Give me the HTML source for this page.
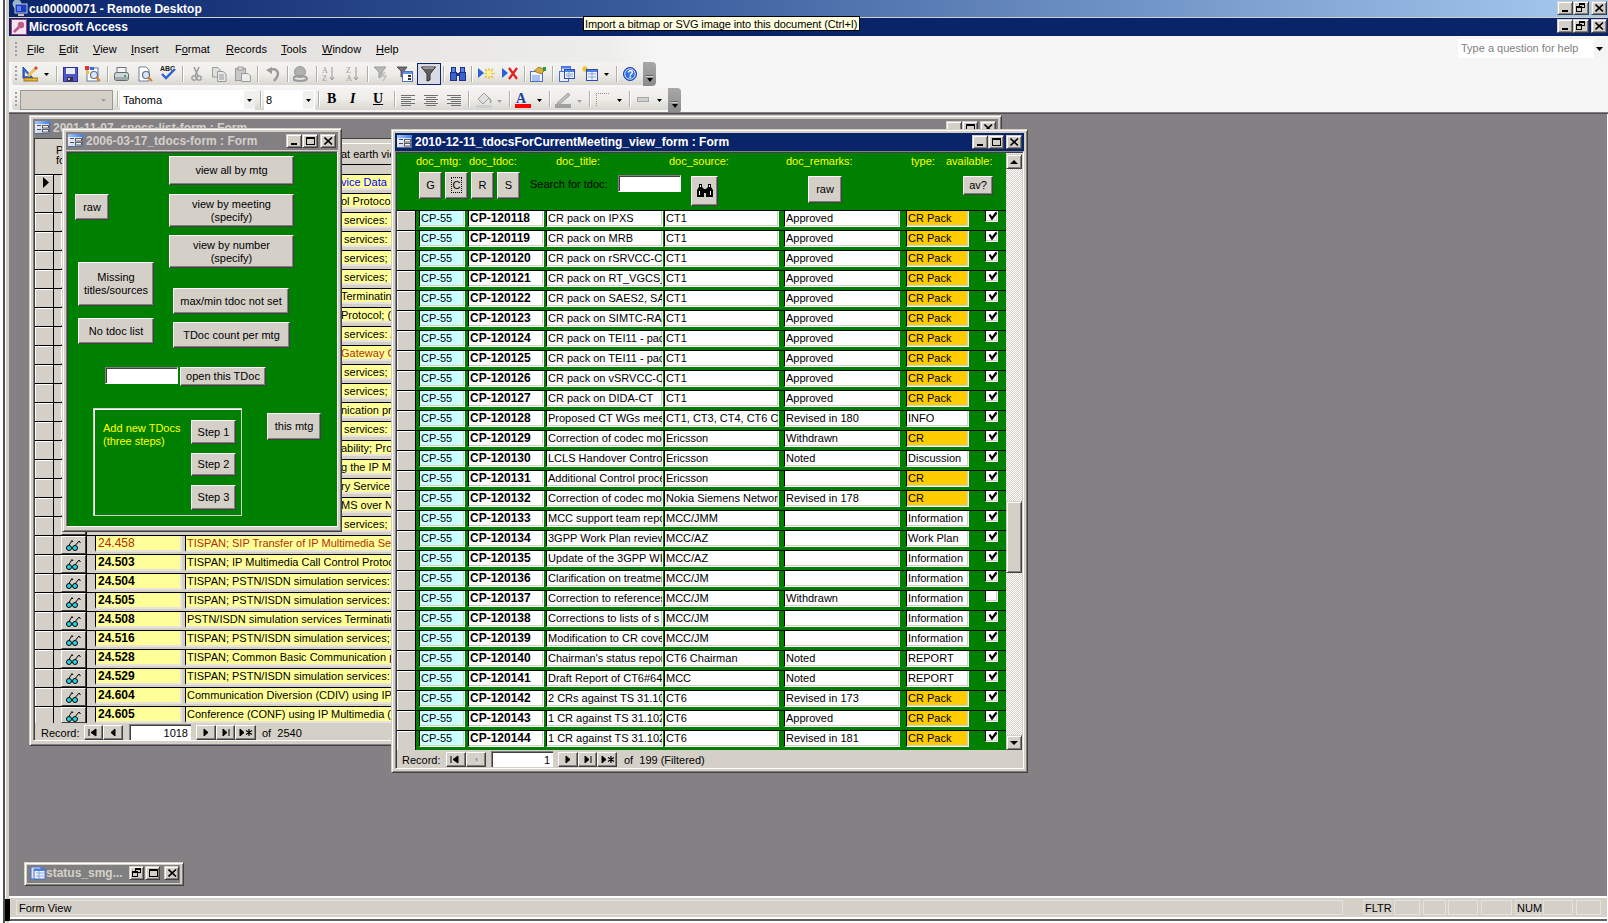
<!DOCTYPE html><html><head><meta charset="utf-8"><style>
*{margin:0;padding:0;box-sizing:border-box}
html,body{width:1608px;height:923px;overflow:hidden}
body{position:relative;background:#fff;font-family:"Liberation Sans",sans-serif;font-size:11px;color:#000}
.a{position:absolute}
.t{white-space:nowrap;line-height:13px}
.btn{background:#D4D0C8;border-top:1px solid #fff;border-left:1px solid #fff;border-right:1px solid #404040;border-bottom:1px solid #404040;box-shadow:inset -1px -1px 0 #808080;display:flex;align-items:center;justify-content:center;text-align:center;line-height:13px;white-space:nowrap}
.sunk{border-top:1px solid #808080;border-left:1px solid #808080;border-right:1px solid #fff;border-bottom:1px solid #fff;box-shadow:inset 1px 1px 0 #404040, inset -1px -1px 0 #D4D0C8}
.cell{overflow:hidden;white-space:nowrap;line-height:14px;padding-left:1px;border-left:1px solid #000;border-right:1px solid #fff;border-bottom:1px solid #fff;box-shadow:inset -1px -1px 0 #D4D0C8}
.tb{font-weight:bold;color:#fff;white-space:nowrap}
.raised{border-top:1px solid #D4D0C8;border-left:1px solid #D4D0C8;border-right:1px solid #404040;border-bottom:1px solid #404040;box-shadow:inset 1px 1px 0 #fff, inset -1px -1px 0 #808080}
</style></head><body><div class="a " style="left:0px;top:0px;width:3px;height:923px;background:#fff"></div><div class="a " style="left:3px;top:0px;width:2px;height:923px;background:#505050"></div><div class="a " style="left:5px;top:0px;width:4px;height:923px;background:#D4D0C8;border-left:1px solid #fff"></div><div class="a " style="left:9px;top:0px;width:1599px;height:17px;background:linear-gradient(to right,#0A246A 0%,#3a5c9c 40%,#A6CAF0 100%)"></div><svg class="a" style="left:11px;top:0px" width="18" height="17" viewBox="0 0 18 17"><circle cx="6" cy="4" r="4.5" fill="#b8d8e0" opacity="0.8"/><rect x="4" y="4" width="12" height="9" fill="#1a3cc0" stroke="#c8c8c8"/><rect x="6" y="6" width="4" height="5" fill="#6080ff"/><rect x="7" y="14" width="6" height="2" fill="#c0c0c0"/></svg><div class="a t " style="left:29px;top:2px;font-weight:bold;color:#fff;font-size:12px;line-height:14px">cu00000071 - Remote Desktop</div><div class="a raised" style="left:1557px;top:1px;width:16px;height:14px;background:#D4D0C8"><div class="a" style="left:4px;top:8px;width:6px;height:2px;background:#000"></div></div><div class="a raised" style="left:1573px;top:1px;width:16px;height:14px;background:#D4D0C8"><div class="a" style="left:5px;top:1px;width:6px;height:5px;border:1px solid #000;border-top-width:2px"></div><div class="a" style="left:2px;top:4px;width:6px;height:6px;border:1px solid #000;border-top-width:2px;background:#D4D0C8"></div></div><div class="a raised" style="left:1591px;top:1px;width:16px;height:14px;background:#D4D0C8"><svg class="a" style="left:3px;top:2px" width="9" height="8" viewBox="0 0 9 8"><path d="M0.5 0.5 L8 7.5 M8 0.5 L0.5 7.5" stroke="#000" stroke-width="1.6"/></svg></div><div class="a " style="left:9px;top:17px;width:1599px;height:1px;background:#D4D0C8"></div><div class="a " style="left:9px;top:18px;width:1599px;height:18px;background:#0A246A"></div><svg class="a" style="left:11px;top:19px" width="16" height="16" viewBox="0 0 16 16"><rect x="0.5" y="0.5" width="15" height="15" fill="#f4e4ee" stroke="#a04070"/><circle cx="10" cy="6" r="3.2" fill="#c05a8a"/><path d="M8 8 L3 13" stroke="#c05a8a" stroke-width="2.6"/></svg><div class="a t " style="left:29px;top:20px;font-weight:bold;color:#fff;font-size:12px;line-height:14px">Microsoft Access</div><div class="a raised" style="left:1557px;top:19px;width:16px;height:14px;background:#D4D0C8"><div class="a" style="left:4px;top:8px;width:6px;height:2px;background:#000"></div></div><div class="a raised" style="left:1573px;top:19px;width:16px;height:14px;background:#D4D0C8"><div class="a" style="left:5px;top:1px;width:6px;height:5px;border:1px solid #000;border-top-width:2px"></div><div class="a" style="left:2px;top:4px;width:6px;height:6px;border:1px solid #000;border-top-width:2px;background:#D4D0C8"></div></div><div class="a raised" style="left:1591px;top:19px;width:16px;height:14px;background:#D4D0C8"><svg class="a" style="left:3px;top:2px" width="9" height="8" viewBox="0 0 9 8"><path d="M0.5 0.5 L8 7.5 M8 0.5 L0.5 7.5" stroke="#000" stroke-width="1.6"/></svg></div><div class="a " style="left:9px;top:36px;width:1599px;height:77px;background:#F6F6F6"></div><div class="a " style="left:9px;top:36px;width:1599px;height:26px;background:linear-gradient(to right,#DEDCD6 0px,#E6E4E0 300px,#EDEDEB 600px,#F6F6F6 650px)"></div><div class="a " style="left:15px;top:42px;width:2px;height:2px;background:#a0a0a0"></div><div class="a " style="left:15px;top:46px;width:2px;height:2px;background:#a0a0a0"></div><div class="a " style="left:15px;top:50px;width:2px;height:2px;background:#a0a0a0"></div><div class="a " style="left:15px;top:54px;width:2px;height:2px;background:#a0a0a0"></div><div class="a t " style="left:27px;top:42px;font-size:11px;line-height:14px"><u>F</u>ile</div><div class="a t " style="left:59px;top:42px;font-size:11px;line-height:14px"><u>E</u>dit</div><div class="a t " style="left:93px;top:42px;font-size:11px;line-height:14px"><u>V</u>iew</div><div class="a t " style="left:131px;top:42px;font-size:11px;line-height:14px"><u>I</u>nsert</div><div class="a t " style="left:175px;top:42px;font-size:11px;line-height:14px">F<u>o</u>rmat</div><div class="a t " style="left:226px;top:42px;font-size:11px;line-height:14px"><u>R</u>ecords</div><div class="a t " style="left:281px;top:42px;font-size:11px;line-height:14px"><u>T</u>ools</div><div class="a t " style="left:322px;top:42px;font-size:11px;line-height:14px"><u>W</u>indow</div><div class="a t " style="left:376px;top:42px;font-size:11px;line-height:14px"><u>H</u>elp</div><div class="a " style="left:1458px;top:39px;width:148px;height:19px;background:#fff"></div><div class="a t " style="left:1461px;top:41px;color:#808080;line-height:14px">Type a question for help</div><div class="a " style="left:1594px;top:39px;width:12px;height:19px;background:#F4F4F4"></div><svg class="a" style="left:1596px;top:47px" width="7" height="4"><path d="M0 0H7L3.5 4Z" fill="#000"/></svg><div class="a " style="left:583px;top:16px;width:277px;height:15px;background:#FFFFE1;border:1px solid #000"></div><div class="a t " style="left:585px;top:18px;line-height:13px;letter-spacing:-0.1px">Import a bitmap or SVG image into this document (Ctrl+I)</div><div class="a " style="left:12px;top:62px;width:632px;height:23px;background:linear-gradient(to bottom,#F4F3F0 0%,#EEEDE9 50%,#D9D7D0 100%);border-radius:3px 0 0 3px"></div><div class="a " style="left:643px;top:62px;width:13px;height:24px;background:linear-gradient(to bottom,#A8A8A8,#8a8a8a);border-radius:0 4px 4px 0"></div><svg class="a" style="left:646px;top:75px" width="8" height="8"><path d="M0 1H7" stroke="#fff"/><path d="M1 3H7L4 7Z" fill="#000"/><path d="M0 0H7" stroke="#000"/></svg><div class="a " style="left:12px;top:88px;width:657px;height:22px;background:linear-gradient(to bottom,#F4F3F0 0%,#EEEDE9 50%,#D9D7D0 100%);border-radius:3px 0 0 3px"></div><div class="a " style="left:668px;top:88px;width:13px;height:25px;background:linear-gradient(to bottom,#A8A8A8,#8a8a8a);border-radius:0 4px 4px 0"></div><svg class="a" style="left:671px;top:101px" width="8" height="8"><path d="M0 1H7" stroke="#fff"/><path d="M1 3H7L4 7Z" fill="#000"/><path d="M0 0H7" stroke="#000"/></svg><div class="a " style="left:15px;top:66px;width:2px;height:2px;background:#a0a0a0"></div><div class="a " style="left:15px;top:70px;width:2px;height:2px;background:#a0a0a0"></div><div class="a " style="left:15px;top:74px;width:2px;height:2px;background:#a0a0a0"></div><div class="a " style="left:15px;top:78px;width:2px;height:2px;background:#a0a0a0"></div><div class="a " style="left:15px;top:92px;width:2px;height:2px;background:#a0a0a0"></div><div class="a " style="left:15px;top:96px;width:2px;height:2px;background:#a0a0a0"></div><div class="a " style="left:15px;top:100px;width:2px;height:2px;background:#a0a0a0"></div><div class="a " style="left:15px;top:104px;width:2px;height:2px;background:#a0a0a0"></div><div class="a " style="left:56px;top:66px;width:1px;height:16px;background:#B0AEA8;border-right:1px solid #fff;width:2px"></div><div class="a " style="left:107px;top:66px;width:1px;height:16px;background:#B0AEA8;border-right:1px solid #fff;width:2px"></div><div class="a " style="left:182px;top:66px;width:1px;height:16px;background:#B0AEA8;border-right:1px solid #fff;width:2px"></div><div class="a " style="left:257px;top:66px;width:1px;height:16px;background:#B0AEA8;border-right:1px solid #fff;width:2px"></div><div class="a " style="left:287px;top:66px;width:1px;height:16px;background:#B0AEA8;border-right:1px solid #fff;width:2px"></div><div class="a " style="left:316px;top:66px;width:1px;height:16px;background:#B0AEA8;border-right:1px solid #fff;width:2px"></div><div class="a " style="left:367px;top:66px;width:1px;height:16px;background:#B0AEA8;border-right:1px solid #fff;width:2px"></div><div class="a " style="left:443px;top:66px;width:1px;height:16px;background:#B0AEA8;border-right:1px solid #fff;width:2px"></div><div class="a " style="left:471px;top:66px;width:1px;height:16px;background:#B0AEA8;border-right:1px solid #fff;width:2px"></div><div class="a " style="left:524px;top:66px;width:1px;height:16px;background:#B0AEA8;border-right:1px solid #fff;width:2px"></div><div class="a " style="left:552px;top:66px;width:1px;height:16px;background:#B0AEA8;border-right:1px solid #fff;width:2px"></div><div class="a " style="left:616px;top:66px;width:1px;height:16px;background:#B0AEA8;border-right:1px solid #fff;width:2px"></div><div class="a " style="left:117px;top:91px;width:1px;height:16px;background:#B0AEA8;border-right:1px solid #fff;width:2px"></div><div class="a " style="left:260px;top:91px;width:1px;height:16px;background:#B0AEA8;border-right:1px solid #fff;width:2px"></div><div class="a " style="left:318px;top:91px;width:1px;height:16px;background:#B0AEA8;border-right:1px solid #fff;width:2px"></div><div class="a " style="left:394px;top:91px;width:1px;height:16px;background:#B0AEA8;border-right:1px solid #fff;width:2px"></div><div class="a " style="left:468px;top:91px;width:1px;height:16px;background:#B0AEA8;border-right:1px solid #fff;width:2px"></div><div class="a " style="left:509px;top:91px;width:1px;height:16px;background:#B0AEA8;border-right:1px solid #fff;width:2px"></div><div class="a " style="left:549px;top:91px;width:1px;height:16px;background:#B0AEA8;border-right:1px solid #fff;width:2px"></div><div class="a " style="left:589px;top:91px;width:1px;height:16px;background:#B0AEA8;border-right:1px solid #fff;width:2px"></div><div class="a " style="left:629px;top:91px;width:1px;height:16px;background:#B0AEA8;border-right:1px solid #fff;width:2px"></div><div class="a " style="left:9px;top:112px;width:1599px;height:2px;background:#505050;border-top:1px solid #808080"></div><svg class="a" style="left:22px;top:66px" width="16" height="16" viewBox="0 0 16 16"><path d="M1 1L1 12L11 12Z" fill="#3d6fd8" stroke="#2040a0"/><path d="M3 6L3 10L7 10Z" fill="#eaf0ff"/><rect x="2" y="12" width="14" height="3" fill="#e8b830" stroke="#906010" stroke-width="0.8"/><path d="M6 10L14 2" stroke="#e8c060" stroke-width="3"/><path d="M13 1L15 3" stroke="#d04040" stroke-width="2.5"/></svg><svg class="a" style="left:44px;top:73px" width="5" height="3"><path d="M0 0H5L2.5 3Z" fill="#000"/></svg><svg class="a" style="left:63px;top:67px" width="15" height="15" viewBox="0 0 15 15"><rect x="0.5" y="0.5" width="14" height="14" fill="#4f57c8" stroke="#30308a"/><rect x="3" y="1" width="9" height="6" fill="#e8ecf8"/><rect x="4" y="10" width="6" height="4" fill="#303048"/><rect x="5" y="11" width="2" height="2" fill="#c0c0d0"/></svg><svg class="a" style="left:85px;top:66px" width="16" height="16" viewBox="0 0 16 16"><rect x="2" y="2" width="11" height="13" fill="#fff" stroke="#6078a8"/><rect x="0" y="0" width="4" height="4" fill="#e03030"/><rect x="5" y="1" width="4" height="3" fill="#3070e0"/><rect x="1" y="5" width="3" height="3" fill="#f0c020"/><circle cx="9" cy="9" r="3.5" fill="#d8e8f8" stroke="#607090" stroke-width="1.2"/><path d="M11.5 11.5L15 15" stroke="#e08020" stroke-width="2.2"/></svg><svg class="a" style="left:114px;top:67px" width="15" height="15" viewBox="0 0 15 15"><rect x="3" y="0.5" width="9" height="6" fill="#f4f4f4" stroke="#707880"/><rect x="0.5" y="5.5" width="14" height="8" rx="2" fill="#d0d4dc" stroke="#606870"/><rect x="1" y="10" width="13" height="3" fill="#a0a8b0"/><rect x="10" y="8" width="2" height="2" fill="#20c020"/></svg><svg class="a" style="left:138px;top:66px" width="16" height="16" viewBox="0 0 16 16"><path d="M1 1H8L11 4V15H1Z" fill="#fff" stroke="#7080a0"/><circle cx="8" cy="9" r="3.5" fill="#d8e8f8" stroke="#607090" stroke-width="1.2"/><path d="M10.5 11.5L14 15" stroke="#e08020" stroke-width="2.2"/></svg><svg class="a" style="left:160px;top:65px" width="16" height="15" viewBox="0 0 16 15"><text x="0" y="6" font-family="Liberation Sans" font-weight="bold" font-size="7" fill="#202020">ABC</text><path d="M2 9L6 13L15 4" stroke="#3060d0" stroke-width="2.4" fill="none"/></svg><svg class="a" style="left:191px;top:66px" width="11" height="15" viewBox="0 0 11 15"><path d="M3 1L7 10M8 1L4 10" stroke="#9a9a9a" stroke-width="1.5"/><circle cx="3" cy="12" r="2.2" fill="none" stroke="#9a9a9a" stroke-width="1.3"/><circle cx="8" cy="12" r="2.2" fill="none" stroke="#9a9a9a" stroke-width="1.3"/></svg><svg class="a" style="left:212px;top:67px" width="15" height="15" viewBox="0 0 15 15"><path d="M0.5 0.5H6L8 2.5V10H0.5Z" fill="#e0e0e0" stroke="#9a9a9a"/><path d="M5.5 4.5H11L14 7V14.5H5.5Z" fill="#e8e8e8" stroke="#9a9a9a"/><path d="M7 8H12M7 10H12M7 12H12" stroke="#9a9a9a"/></svg><svg class="a" style="left:235px;top:66px" width="16" height="16" viewBox="0 0 16 16"><rect x="0.5" y="2.5" width="10" height="12" fill="#c8c8c8" stroke="#9a9a9a"/><rect x="3" y="1" width="5" height="3" fill="#e0e0e0" stroke="#9a9a9a"/><path d="M6.5 7.5H13L15.5 10V15.5H6.5Z" fill="#ececec" stroke="#9a9a9a"/></svg><svg class="a" style="left:266px;top:67px" width="14" height="15" viewBox="0 0 14 15"><path d="M4 3C9 1 14 4 11 10L8 14" stroke="#9a9a9a" stroke-width="2.4" fill="none"/><path d="M0 3L6 0L6 7Z" fill="#9a9a9a"/></svg><svg class="a" style="left:293px;top:66px" width="16" height="16" viewBox="0 0 16 16"><circle cx="7" cy="6" r="5.5" fill="#b0b0b0" stroke="#9a9a9a"/><ellipse cx="7" cy="12.5" rx="7" ry="2.5" fill="none" stroke="#9a9a9a" stroke-width="2"/></svg><svg class="a" style="left:322px;top:66px" width="13" height="16" viewBox="0 0 13 16"><text x="0" y="7" font-family="Liberation Serif" font-size="8" fill="#9a9a9a">A</text><text x="0" y="15" font-family="Liberation Serif" font-size="8" fill="#9a9a9a">Z</text><path d="M10 1V14M8 11L10 14L12 11" stroke="#9a9a9a" fill="none"/></svg><svg class="a" style="left:346px;top:66px" width="13" height="16" viewBox="0 0 13 16"><text x="0" y="7" font-family="Liberation Serif" font-size="8" fill="#9a9a9a">Z</text><text x="0" y="15" font-family="Liberation Serif" font-size="8" fill="#9a9a9a">A</text><path d="M10 1V14M8 11L10 14L12 11" stroke="#9a9a9a" fill="none"/></svg><svg class="a" style="left:374px;top:66px" width="15" height="16" viewBox="0 0 15 16"><path d="M0 1H12L8 6V10L5 12V6Z" fill="#b8b8b8" stroke="#9a9a9a"/><path d="M11 6L8 10H12L9 15" stroke="#c0c0c0" stroke-width="1.5" fill="none"/></svg><svg class="a" style="left:397px;top:66px" width="16" height="16" viewBox="0 0 16 16"><path d="M0 1H10L7 5V9L4 11V5Z" fill="#707070" stroke="#404040" stroke-width="0.8"/><rect x="5.5" y="5.5" width="10" height="10" fill="#fff" stroke="#4a70c8"/><rect x="6" y="6" width="9" height="2" fill="#6a90e0"/><rect x="11" y="9" width="3" height="2" fill="#333"/><rect x="11" y="12" width="3" height="2" fill="#333"/></svg><div class="a " style="left:417px;top:63px;width:24px;height:22px;background:#D8DAE4;border:1px solid #0A246A"></div><svg class="a" style="left:421px;top:66px" width="15" height="16" viewBox="0 0 15 16"><path d="M0.5 1H14.5L9 8V14L6 15V8Z" fill="#606060" stroke="#303030"/><path d="M2 2H13" stroke="#d0d0d0"/></svg><svg class="a" style="left:450px;top:66px" width="16" height="16" viewBox="0 0 16 16"><rect x="0.5" y="6.5" width="6" height="8" fill="#3a62c8" stroke="#20308a"/><rect x="9.5" y="6.5" width="6" height="8" fill="#3a62c8" stroke="#20308a"/><rect x="1.5" y="1.5" width="4" height="5" fill="#5a82e0" stroke="#20308a"/><rect x="10.5" y="1.5" width="4" height="5" fill="#5a82e0" stroke="#20308a"/><rect x="6" y="7" width="4" height="3" fill="#20308a"/></svg><svg class="a" style="left:478px;top:67px" width="17" height="13" viewBox="0 0 17 13"><path d="M0 1L6 6L0 11Z" fill="#2a60d8"/><path d="M11 1V12M5.5 6.5H16.5M7 2L15 11M15 2L7 11" stroke="#f0c020" stroke-width="1.2"/><rect x="9" y="4" width="4" height="5" fill="#fff8a0"/></svg><svg class="a" style="left:502px;top:67px" width="16" height="13" viewBox="0 0 16 13"><path d="M0 1L6 6L0 11Z" fill="#2a60d8"/><path d="M7 1L15 12M15 1L7 12" stroke="#e02020" stroke-width="2.2"/></svg><svg class="a" style="left:530px;top:66px" width="16" height="16" viewBox="0 0 16 16"><rect x="0.5" y="5.5" width="12" height="10" fill="#eef2fc" stroke="#4a70c8"/><path d="M2 10H10M2 12H10M2 14H10" stroke="#6a90e0"/><path d="M4 5L9 1L15 4L11 8Z" fill="#d8b040" stroke="#907010" stroke-width="0.8"/><rect x="13" y="1" width="3" height="4" fill="#20a040"/></svg><svg class="a" style="left:559px;top:66px" width="16" height="16" viewBox="0 0 16 16"><rect x="2.5" y="0.5" width="9" height="12" fill="#e0e8f8" stroke="#4a70c8"/><rect x="2.5" y="0.5" width="9" height="2" fill="#4a80e8"/><rect x="0.5" y="5.5" width="9" height="10" fill="#e8eefa" stroke="#4a70c8"/><rect x="5.5" y="3.5" width="10" height="9" fill="#eef3fc" stroke="#2a50a8"/><rect x="6" y="4" width="9" height="2" fill="#4a80e8"/><path d="M7 8H14M7 10H14M10 6V12" stroke="#8aa8e0"/></svg><svg class="a" style="left:582px;top:66px" width="16" height="16" viewBox="0 0 16 16"><path d="M3 0V6M0 3H6M1 1L5 5M5 1L1 5" stroke="#f0c020" stroke-width="1.2"/><rect x="4.5" y="3.5" width="11" height="11" fill="#eef3fc" stroke="#2a50a8"/><rect x="5" y="4" width="10" height="2" fill="#4a80e8"/><path d="M6 8H14M6 11H14M10 6V14" stroke="#8aa8e0"/></svg><svg class="a" style="left:604px;top:73px" width="5" height="3"><path d="M0 0H5L2.5 3Z" fill="#000"/></svg><svg class="a" style="left:623px;top:67px" width="14" height="14" viewBox="0 0 14 14"><circle cx="7" cy="7" r="6.5" fill="#2f6ee8" stroke="#1840a0"/><circle cx="7" cy="7" r="5.2" fill="none" stroke="#fff" stroke-width="0.8"/><text x="4.2" y="11" font-family="Liberation Sans" font-weight="bold" font-size="10" fill="#fff">?</text></svg><div class="a " style="left:20px;top:90px;width:93px;height:20px;background:#D4D0C8;border:1px solid #9a9890"></div><svg class="a" style="left:101px;top:99px" width="5" height="3"><path d="M0 0H5L2.5 3Z" fill="#a0a0a0"/></svg><div class="a " style="left:120px;top:90px;width:135px;height:20px;background:#fff"></div><div class="a " style="left:244px;top:91px;width:11px;height:18px;background:#F0F0EE"></div><svg class="a" style="left:247px;top:99px" width="5" height="3"><path d="M0 0H5L2.5 3Z" fill="#000"/></svg><div class="a t " style="left:123px;top:93px;font-size:11px;line-height:14px">Tahoma</div><div class="a " style="left:264px;top:90px;width:51px;height:20px;background:#fff"></div><div class="a " style="left:303px;top:91px;width:11px;height:18px;background:#F0F0EE"></div><svg class="a" style="left:306px;top:99px" width="5" height="3"><path d="M0 0H5L2.5 3Z" fill="#000"/></svg><div class="a t " style="left:266px;top:93px;font-size:11px;line-height:14px">8</div><div class="a t " style="left:327px;top:91px;font-family:Liberation Serif;font-weight:bold;font-size:14px;line-height:16px">B</div><div class="a t " style="left:350px;top:91px;font-family:Liberation Serif;font-weight:bold;font-style:italic;font-size:14px;line-height:16px">I</div><div class="a t " style="left:373px;top:91px;font-family:Liberation Serif;font-weight:bold;font-size:14px;line-height:16px;text-decoration:underline">U</div><svg class="a" style="left:401px;top:94px" width="14" height="13" viewBox="0 0 14 13"><path d="M0 1.5H14" stroke="#707070"/><path d="M0 3.5H10" stroke="#707070"/><path d="M0 5.5H14" stroke="#707070"/><path d="M0 7.5H10" stroke="#707070"/><path d="M0 9.5H14" stroke="#707070"/><path d="M0 11.5H10" stroke="#707070"/></svg><svg class="a" style="left:424px;top:94px" width="14" height="13" viewBox="0 0 14 13"><path d="M0 1.5H14" stroke="#707070"/><path d="M2 3.5H12" stroke="#707070"/><path d="M0 5.5H14" stroke="#707070"/><path d="M2 7.5H12" stroke="#707070"/><path d="M0 9.5H14" stroke="#707070"/><path d="M2 11.5H12" stroke="#707070"/></svg><svg class="a" style="left:447px;top:94px" width="14" height="13" viewBox="0 0 14 13"><path d="M0 1.5H14" stroke="#707070"/><path d="M4 3.5H14" stroke="#707070"/><path d="M0 5.5H14" stroke="#707070"/><path d="M4 7.5H14" stroke="#707070"/><path d="M0 9.5H14" stroke="#707070"/><path d="M4 11.5H14" stroke="#707070"/></svg><svg class="a" style="left:476px;top:91px" width="16" height="17" viewBox="0 0 16 17"><path d="M2 8L8 2L13 7L7 13Z" fill="#e0e0e0" stroke="#a0a0a0"/><path d="M13 7C15 9 15 11 14 12" stroke="#a0a0a0" fill="none" stroke-width="1.5"/><rect x="0" y="14" width="16" height="3" fill="#d0d0d0"/></svg><svg class="a" style="left:497px;top:100px" width="5" height="3"><path d="M0 0H5L2.5 3Z" fill="#a0a0a0"/></svg><svg class="a" style="left:515px;top:92px" width="16" height="16" viewBox="0 0 16 16"><text x="1" y="11" font-family="Liberation Serif" font-weight="bold" font-size="14" fill="#2040a0">A</text><rect x="0" y="12" width="16" height="4" fill="#f00"/></svg><svg class="a" style="left:537px;top:99px" width="5" height="3"><path d="M0 0H5L2.5 3Z" fill="#000"/></svg><svg class="a" style="left:555px;top:92px" width="16" height="16" viewBox="0 0 16 16"><path d="M2 11L13 1L15 3L5 12Z" fill="#c0c0c0" stroke="#a0a0a0"/><rect x="0" y="12" width="16" height="4" fill="#a0a0a0"/></svg><svg class="a" style="left:577px;top:100px" width="5" height="3"><path d="M0 0H5L2.5 3Z" fill="#a0a0a0"/></svg><svg class="a" style="left:596px;top:93px" width="13" height="13" viewBox="0 0 13 13"><path d="M0.5 0V13M0 0.5H13" stroke="#909090" stroke-dasharray="1 1"/></svg><svg class="a" style="left:617px;top:99px" width="5" height="3"><path d="M0 0H5L2.5 3Z" fill="#000"/></svg><div class="a " style="left:637px;top:97px;width:12px;height:5px;background:#d0d0d0;border:1px solid #a8a8a8"></div><svg class="a" style="left:657px;top:99px" width="5" height="3"><path d="M0 0H5L2.5 3Z" fill="#000"/></svg><div class="a " style="left:9px;top:114px;width:1598px;height:783px;background:#848185"></div><div class="a " style="left:9px;top:896px;width:1599px;height:2px;background:#fff"></div><div class="a " style="left:9px;top:898px;width:1599px;height:19px;background:#D4D0C8"></div><div class="a " style="left:9px;top:917px;width:1599px;height:2px;background:#fff"></div><div class="a " style="left:9px;top:919px;width:1599px;height:2px;background:#606060"></div><div class="a " style="left:5px;top:899px;width:5px;height:22px;background:#000"></div><div class="a " style="left:1607px;top:114px;width:1px;height:807px;background:#fff"></div><div class="a " style="left:16px;top:900px;width:1327px;height:15px;border:1px solid #E6E2DE;border-right-color:#E6E2DE"></div><div class="a t " style="left:19px;top:902px;line-height:13px">Form View</div><div class="a " style="left:1363px;top:900px;width:28px;height:15px;border:1px solid #E6E2DE"></div><div class="a " style="left:1394px;top:900px;width:26px;height:15px;border:1px solid #E6E2DE"></div><div class="a " style="left:1423px;top:900px;width:23px;height:15px;border:1px solid #E6E2DE"></div><div class="a " style="left:1448px;top:900px;width:30px;height:15px;border:1px solid #E6E2DE"></div><div class="a " style="left:1481px;top:900px;width:31px;height:15px;border:1px solid #E6E2DE"></div><div class="a " style="left:1515px;top:900px;width:26px;height:15px;border:1px solid #E6E2DE"></div><div class="a " style="left:1543px;top:900px;width:30px;height:15px;border:1px solid #E6E2DE"></div><div class="a " style="left:1576px;top:900px;width:25px;height:15px;border:1px solid #E6E2DE"></div><div class="a t " style="left:1365px;top:902px;">FLTR</div><div class="a t " style="left:1517px;top:902px;">NUM</div><div class="a " style="left:24px;top:862px;width:160px;height:24px;background:#D4D0C8;border-top:1px solid #D4D0C8;border-left:1px solid #D4D0C8;border-right:1px solid #404040;border-bottom:1px solid #404040;box-shadow:inset 1px 1px 0 #fff,inset -1px -1px 0 #808080"></div><div class="a " style="left:27px;top:865px;width:153px;height:18px;background:#808080"></div><svg class="a" style="left:29px;top:864px" width="17" height="17" viewBox="0 0 17 17"><rect x="2" y="3" width="10" height="12" fill="#dfe8f8" stroke="#4a70c8"/><rect x="5" y="5" width="11" height="10" fill="#eef3fc" stroke="#4a70c8"/><rect x="5" y="5" width="11" height="2" fill="#4a80e8"/><path d="M7 9H15M7 12H15M10 7V15" stroke="#8aa8e0"/></svg><div class="a t " style="left:46px;top:866px;font-weight:bold;color:#D4D0C8;font-size:12px;line-height:14px">status_smg...</div><div class="a raised" style="left:129px;top:866px;width:15px;height:14px;background:#D4D0C8"><div class="a" style="left:5px;top:1px;width:6px;height:5px;border:1px solid #000;border-top-width:2px"></div><div class="a" style="left:2px;top:4px;width:6px;height:6px;border:1px solid #000;border-top-width:2px;background:#D4D0C8"></div></div><div class="a raised" style="left:145px;top:866px;width:15px;height:14px;background:#D4D0C8"><div class="a" style="left:3px;top:2px;width:9px;height:8px;border:1px solid #000;border-top-width:2px"></div></div><div class="a raised" style="left:164px;top:866px;width:15px;height:14px;background:#D4D0C8"><svg class="a" style="left:3px;top:2px" width="9" height="8" viewBox="0 0 9 8"><path d="M0.5 0.5 L8 7.5 M8 0.5 L0.5 7.5" stroke="#000" stroke-width="1.6"/></svg></div><div class="a" style="left:29px;top:115px;width:973px;height:631px;background:#D4D0C8;border-top:1px solid #D4D0C8;border-left:1px solid #D4D0C8;border-right:1px solid #404040;border-bottom:1px solid #404040;box-shadow:inset 1px 1px 0 #fff,inset -1px -1px 0 #808080"></div><div class="a " style="left:33px;top:119px;width:965px;height:18px;background:#838084"></div><svg class="a" style="left:35px;top:121px" width="15" height="13" viewBox="0 0 15 13"><defs><linearGradient id="fg" x1="0" x2="1" y1="0" y2="1"><stop offset="0" stop-color="#f8faff"/><stop offset="1" stop-color="#b8c8e8"/></linearGradient><linearGradient id="fb" x1="0" x2="1"><stop offset="0" stop-color="#a8c4ff"/><stop offset="1" stop-color="#3f7ee8"/></linearGradient></defs><rect x="0" y="0" width="15" height="13" fill="url(#fg)"/><rect x="0" y="0" width="15" height="3" fill="url(#fb)"/><rect x="2" y="4" width="4" height="1" fill="#505050"/><rect x="7.5" y="4.5" width="6" height="2.5" fill="#f4f4f4" stroke="#505050" stroke-width="0.9"/><rect x="2" y="8" width="4" height="1" fill="#505050"/><rect x="7.5" y="8.5" width="6" height="2.5" fill="#f4f4f4" stroke="#505050" stroke-width="0.9"/><path d="M14.5 3V12.5H0" stroke="#5a6a90" fill="none"/></svg><div class="a t " style="left:53px;top:121px;font-weight:bold;color:#D4D0C8;font-size:12px;line-height:14px">2001-11-07_specs-list-form : Form</div><div class="a raised" style="left:946px;top:121px;width:16px;height:14px;background:#D4D0C8"><div class="a" style="left:4px;top:8px;width:6px;height:2px;background:#000"></div></div><div class="a raised" style="left:962px;top:121px;width:16px;height:14px;background:#D4D0C8"><div class="a" style="left:3px;top:2px;width:9px;height:8px;border:1px solid #000;border-top-width:2px"></div></div><div class="a raised" style="left:980px;top:121px;width:16px;height:14px;background:#D4D0C8"><svg class="a" style="left:3px;top:2px" width="9" height="8" viewBox="0 0 9 8"><path d="M0.5 0.5 L8 7.5 M8 0.5 L0.5 7.5" stroke="#000" stroke-width="1.6"/></svg></div><div class="a " style="left:33px;top:137px;width:965px;height:604px;background:#D4D0C8;border-top:1px solid #808080;border-left:1px solid #808080;border-right:1px solid #fff;border-bottom:1px solid #fff;box-shadow:inset 1px 1px 0 #404040"></div><div class="a " style="left:63px;top:143px;width:934px;height:1px;background:#fff"></div><div class="a " style="left:63px;top:164px;width:934px;height:1px;background:#000"></div><div class="a t " style="left:56px;top:145px;line-height:11px">P</div><div class="a t " style="left:56px;top:155px;line-height:11px">fo</div><div class="a t " style="left:341px;top:148px;font-size:11px">at earth vie</div><div class="a " style="left:35px;top:174px;width:962px;height:1px;background:#000"></div><div class="a " style="left:35px;top:175px;width:18px;height:18px;background:#D4D0C8;border-top:1px solid #fff;border-left:1px solid #fff"></div><div class="a " style="left:53px;top:174px;width:1px;height:19px;background:#000"></div><div class="a " style="left:61px;top:175px;width:25px;height:18px;background:#D4D0C8;border-top:1px solid #fff;border-left:1px solid #fff;border-right:1px solid #404040;border-bottom:1px solid #404040"></div><div class="a " style="left:86px;top:174px;width:1px;height:19px;background:#000"></div><svg class="a" style="left:65px;top:178px" width="17" height="12" viewBox="0 0 17 12"><path d="M3 8 L7 1.5 L8 3 M9 8 L14 2 L15.5 4" stroke="#000" fill="none" stroke-width="1"/><ellipse cx="4" cy="9" rx="2.5" ry="2.5" fill="#20d8e8" stroke="#000"/><ellipse cx="10" cy="9" rx="2.5" ry="2.5" fill="#20d8e8" stroke="#000"/></svg><svg class="a" style="left:43px;top:177px" width="6" height="11"><path d="M0 0 L6 5.5 L0 11Z" fill="#000"/></svg><div class="a " style="left:341px;top:175px;width:50px;height:15px;background:#FFFF99;border-bottom:2px solid #E8E4DC"></div><div class="a t " style="left:341px;top:176px;color:#0000FF">vice Data |</div><div class="a " style="left:35px;top:193px;width:962px;height:1px;background:#000"></div><div class="a " style="left:35px;top:194px;width:18px;height:18px;background:#D4D0C8;border-top:1px solid #fff;border-left:1px solid #fff"></div><div class="a " style="left:53px;top:193px;width:1px;height:19px;background:#000"></div><div class="a " style="left:61px;top:194px;width:25px;height:18px;background:#D4D0C8;border-top:1px solid #fff;border-left:1px solid #fff;border-right:1px solid #404040;border-bottom:1px solid #404040"></div><div class="a " style="left:86px;top:193px;width:1px;height:19px;background:#000"></div><svg class="a" style="left:65px;top:197px" width="17" height="12" viewBox="0 0 17 12"><path d="M3 8 L7 1.5 L8 3 M9 8 L14 2 L15.5 4" stroke="#000" fill="none" stroke-width="1"/><ellipse cx="4" cy="9" rx="2.5" ry="2.5" fill="#20d8e8" stroke="#000"/><ellipse cx="10" cy="9" rx="2.5" ry="2.5" fill="#20d8e8" stroke="#000"/></svg><div class="a " style="left:341px;top:194px;width:50px;height:15px;background:#FFFF99;border-bottom:2px solid #E8E4DC"></div><div class="a t " style="left:341px;top:195px;color:#000">ol Protoco</div><div class="a " style="left:35px;top:212px;width:962px;height:1px;background:#000"></div><div class="a " style="left:35px;top:213px;width:18px;height:18px;background:#D4D0C8;border-top:1px solid #fff;border-left:1px solid #fff"></div><div class="a " style="left:53px;top:212px;width:1px;height:19px;background:#000"></div><div class="a " style="left:61px;top:213px;width:25px;height:18px;background:#D4D0C8;border-top:1px solid #fff;border-left:1px solid #fff;border-right:1px solid #404040;border-bottom:1px solid #404040"></div><div class="a " style="left:86px;top:212px;width:1px;height:19px;background:#000"></div><svg class="a" style="left:65px;top:216px" width="17" height="12" viewBox="0 0 17 12"><path d="M3 8 L7 1.5 L8 3 M9 8 L14 2 L15.5 4" stroke="#000" fill="none" stroke-width="1"/><ellipse cx="4" cy="9" rx="2.5" ry="2.5" fill="#20d8e8" stroke="#000"/><ellipse cx="10" cy="9" rx="2.5" ry="2.5" fill="#20d8e8" stroke="#000"/></svg><div class="a " style="left:341px;top:213px;width:50px;height:15px;background:#FFFF99;border-bottom:2px solid #E8E4DC"></div><div class="a t " style="left:341px;top:214px;color:#000">&nbsp;services: |</div><div class="a " style="left:35px;top:231px;width:962px;height:1px;background:#000"></div><div class="a " style="left:35px;top:232px;width:18px;height:18px;background:#D4D0C8;border-top:1px solid #fff;border-left:1px solid #fff"></div><div class="a " style="left:53px;top:231px;width:1px;height:19px;background:#000"></div><div class="a " style="left:61px;top:232px;width:25px;height:18px;background:#D4D0C8;border-top:1px solid #fff;border-left:1px solid #fff;border-right:1px solid #404040;border-bottom:1px solid #404040"></div><div class="a " style="left:86px;top:231px;width:1px;height:19px;background:#000"></div><svg class="a" style="left:65px;top:235px" width="17" height="12" viewBox="0 0 17 12"><path d="M3 8 L7 1.5 L8 3 M9 8 L14 2 L15.5 4" stroke="#000" fill="none" stroke-width="1"/><ellipse cx="4" cy="9" rx="2.5" ry="2.5" fill="#20d8e8" stroke="#000"/><ellipse cx="10" cy="9" rx="2.5" ry="2.5" fill="#20d8e8" stroke="#000"/></svg><div class="a " style="left:341px;top:232px;width:50px;height:15px;background:#FFFF99;border-bottom:2px solid #E8E4DC"></div><div class="a t " style="left:341px;top:233px;color:#000">&nbsp;services: |</div><div class="a " style="left:35px;top:250px;width:962px;height:1px;background:#000"></div><div class="a " style="left:35px;top:251px;width:18px;height:18px;background:#D4D0C8;border-top:1px solid #fff;border-left:1px solid #fff"></div><div class="a " style="left:53px;top:250px;width:1px;height:19px;background:#000"></div><div class="a " style="left:61px;top:251px;width:25px;height:18px;background:#D4D0C8;border-top:1px solid #fff;border-left:1px solid #fff;border-right:1px solid #404040;border-bottom:1px solid #404040"></div><div class="a " style="left:86px;top:250px;width:1px;height:19px;background:#000"></div><svg class="a" style="left:65px;top:254px" width="17" height="12" viewBox="0 0 17 12"><path d="M3 8 L7 1.5 L8 3 M9 8 L14 2 L15.5 4" stroke="#000" fill="none" stroke-width="1"/><ellipse cx="4" cy="9" rx="2.5" ry="2.5" fill="#20d8e8" stroke="#000"/><ellipse cx="10" cy="9" rx="2.5" ry="2.5" fill="#20d8e8" stroke="#000"/></svg><div class="a " style="left:341px;top:251px;width:50px;height:15px;background:#FFFF99;border-bottom:2px solid #E8E4DC"></div><div class="a t " style="left:341px;top:252px;color:#000">&nbsp;services; |</div><div class="a " style="left:35px;top:269px;width:962px;height:1px;background:#000"></div><div class="a " style="left:35px;top:270px;width:18px;height:18px;background:#D4D0C8;border-top:1px solid #fff;border-left:1px solid #fff"></div><div class="a " style="left:53px;top:269px;width:1px;height:19px;background:#000"></div><div class="a " style="left:61px;top:270px;width:25px;height:18px;background:#D4D0C8;border-top:1px solid #fff;border-left:1px solid #fff;border-right:1px solid #404040;border-bottom:1px solid #404040"></div><div class="a " style="left:86px;top:269px;width:1px;height:19px;background:#000"></div><svg class="a" style="left:65px;top:273px" width="17" height="12" viewBox="0 0 17 12"><path d="M3 8 L7 1.5 L8 3 M9 8 L14 2 L15.5 4" stroke="#000" fill="none" stroke-width="1"/><ellipse cx="4" cy="9" rx="2.5" ry="2.5" fill="#20d8e8" stroke="#000"/><ellipse cx="10" cy="9" rx="2.5" ry="2.5" fill="#20d8e8" stroke="#000"/></svg><div class="a " style="left:341px;top:270px;width:50px;height:15px;background:#FFFF99;border-bottom:2px solid #E8E4DC"></div><div class="a t " style="left:341px;top:271px;color:#000">&nbsp;services; |</div><div class="a " style="left:35px;top:288px;width:962px;height:1px;background:#000"></div><div class="a " style="left:35px;top:289px;width:18px;height:18px;background:#D4D0C8;border-top:1px solid #fff;border-left:1px solid #fff"></div><div class="a " style="left:53px;top:288px;width:1px;height:19px;background:#000"></div><div class="a " style="left:61px;top:289px;width:25px;height:18px;background:#D4D0C8;border-top:1px solid #fff;border-left:1px solid #fff;border-right:1px solid #404040;border-bottom:1px solid #404040"></div><div class="a " style="left:86px;top:288px;width:1px;height:19px;background:#000"></div><svg class="a" style="left:65px;top:292px" width="17" height="12" viewBox="0 0 17 12"><path d="M3 8 L7 1.5 L8 3 M9 8 L14 2 L15.5 4" stroke="#000" fill="none" stroke-width="1"/><ellipse cx="4" cy="9" rx="2.5" ry="2.5" fill="#20d8e8" stroke="#000"/><ellipse cx="10" cy="9" rx="2.5" ry="2.5" fill="#20d8e8" stroke="#000"/></svg><div class="a " style="left:341px;top:289px;width:50px;height:15px;background:#FFFF99;border-bottom:2px solid #E8E4DC"></div><div class="a t " style="left:341px;top:290px;color:#000">Terminatin</div><div class="a " style="left:35px;top:307px;width:962px;height:1px;background:#000"></div><div class="a " style="left:35px;top:308px;width:18px;height:18px;background:#D4D0C8;border-top:1px solid #fff;border-left:1px solid #fff"></div><div class="a " style="left:53px;top:307px;width:1px;height:19px;background:#000"></div><div class="a " style="left:61px;top:308px;width:25px;height:18px;background:#D4D0C8;border-top:1px solid #fff;border-left:1px solid #fff;border-right:1px solid #404040;border-bottom:1px solid #404040"></div><div class="a " style="left:86px;top:307px;width:1px;height:19px;background:#000"></div><svg class="a" style="left:65px;top:311px" width="17" height="12" viewBox="0 0 17 12"><path d="M3 8 L7 1.5 L8 3 M9 8 L14 2 L15.5 4" stroke="#000" fill="none" stroke-width="1"/><ellipse cx="4" cy="9" rx="2.5" ry="2.5" fill="#20d8e8" stroke="#000"/><ellipse cx="10" cy="9" rx="2.5" ry="2.5" fill="#20d8e8" stroke="#000"/></svg><div class="a " style="left:341px;top:308px;width:50px;height:15px;background:#FFFF99;border-bottom:2px solid #E8E4DC"></div><div class="a t " style="left:341px;top:309px;color:#000">Protocol; (</div><div class="a " style="left:35px;top:326px;width:962px;height:1px;background:#000"></div><div class="a " style="left:35px;top:327px;width:18px;height:18px;background:#D4D0C8;border-top:1px solid #fff;border-left:1px solid #fff"></div><div class="a " style="left:53px;top:326px;width:1px;height:19px;background:#000"></div><div class="a " style="left:61px;top:327px;width:25px;height:18px;background:#D4D0C8;border-top:1px solid #fff;border-left:1px solid #fff;border-right:1px solid #404040;border-bottom:1px solid #404040"></div><div class="a " style="left:86px;top:326px;width:1px;height:19px;background:#000"></div><svg class="a" style="left:65px;top:330px" width="17" height="12" viewBox="0 0 17 12"><path d="M3 8 L7 1.5 L8 3 M9 8 L14 2 L15.5 4" stroke="#000" fill="none" stroke-width="1"/><ellipse cx="4" cy="9" rx="2.5" ry="2.5" fill="#20d8e8" stroke="#000"/><ellipse cx="10" cy="9" rx="2.5" ry="2.5" fill="#20d8e8" stroke="#000"/></svg><div class="a " style="left:341px;top:327px;width:50px;height:15px;background:#FFFF99;border-bottom:2px solid #E8E4DC"></div><div class="a t " style="left:341px;top:328px;color:#000">&nbsp;services: /</div><div class="a " style="left:35px;top:345px;width:962px;height:1px;background:#000"></div><div class="a " style="left:35px;top:346px;width:18px;height:18px;background:#D4D0C8;border-top:1px solid #fff;border-left:1px solid #fff"></div><div class="a " style="left:53px;top:345px;width:1px;height:19px;background:#000"></div><div class="a " style="left:61px;top:346px;width:25px;height:18px;background:#D4D0C8;border-top:1px solid #fff;border-left:1px solid #fff;border-right:1px solid #404040;border-bottom:1px solid #404040"></div><div class="a " style="left:86px;top:345px;width:1px;height:19px;background:#000"></div><svg class="a" style="left:65px;top:349px" width="17" height="12" viewBox="0 0 17 12"><path d="M3 8 L7 1.5 L8 3 M9 8 L14 2 L15.5 4" stroke="#000" fill="none" stroke-width="1"/><ellipse cx="4" cy="9" rx="2.5" ry="2.5" fill="#20d8e8" stroke="#000"/><ellipse cx="10" cy="9" rx="2.5" ry="2.5" fill="#20d8e8" stroke="#000"/></svg><div class="a " style="left:341px;top:346px;width:50px;height:15px;background:#FFFF99;border-bottom:2px solid #E8E4DC"></div><div class="a t " style="left:341px;top:347px;color:#B03000">Gateway C</div><div class="a " style="left:35px;top:364px;width:962px;height:1px;background:#000"></div><div class="a " style="left:35px;top:365px;width:18px;height:18px;background:#D4D0C8;border-top:1px solid #fff;border-left:1px solid #fff"></div><div class="a " style="left:53px;top:364px;width:1px;height:19px;background:#000"></div><div class="a " style="left:61px;top:365px;width:25px;height:18px;background:#D4D0C8;border-top:1px solid #fff;border-left:1px solid #fff;border-right:1px solid #404040;border-bottom:1px solid #404040"></div><div class="a " style="left:86px;top:364px;width:1px;height:19px;background:#000"></div><svg class="a" style="left:65px;top:368px" width="17" height="12" viewBox="0 0 17 12"><path d="M3 8 L7 1.5 L8 3 M9 8 L14 2 L15.5 4" stroke="#000" fill="none" stroke-width="1"/><ellipse cx="4" cy="9" rx="2.5" ry="2.5" fill="#20d8e8" stroke="#000"/><ellipse cx="10" cy="9" rx="2.5" ry="2.5" fill="#20d8e8" stroke="#000"/></svg><div class="a " style="left:341px;top:365px;width:50px;height:15px;background:#FFFF99;border-bottom:2px solid #E8E4DC"></div><div class="a t " style="left:341px;top:366px;color:#000">&nbsp;services; |</div><div class="a " style="left:35px;top:383px;width:962px;height:1px;background:#000"></div><div class="a " style="left:35px;top:384px;width:18px;height:18px;background:#D4D0C8;border-top:1px solid #fff;border-left:1px solid #fff"></div><div class="a " style="left:53px;top:383px;width:1px;height:19px;background:#000"></div><div class="a " style="left:61px;top:384px;width:25px;height:18px;background:#D4D0C8;border-top:1px solid #fff;border-left:1px solid #fff;border-right:1px solid #404040;border-bottom:1px solid #404040"></div><div class="a " style="left:86px;top:383px;width:1px;height:19px;background:#000"></div><svg class="a" style="left:65px;top:387px" width="17" height="12" viewBox="0 0 17 12"><path d="M3 8 L7 1.5 L8 3 M9 8 L14 2 L15.5 4" stroke="#000" fill="none" stroke-width="1"/><ellipse cx="4" cy="9" rx="2.5" ry="2.5" fill="#20d8e8" stroke="#000"/><ellipse cx="10" cy="9" rx="2.5" ry="2.5" fill="#20d8e8" stroke="#000"/></svg><div class="a " style="left:341px;top:384px;width:50px;height:15px;background:#FFFF99;border-bottom:2px solid #E8E4DC"></div><div class="a t " style="left:341px;top:385px;color:#000">&nbsp;services; |</div><div class="a " style="left:35px;top:402px;width:962px;height:1px;background:#000"></div><div class="a " style="left:35px;top:403px;width:18px;height:18px;background:#D4D0C8;border-top:1px solid #fff;border-left:1px solid #fff"></div><div class="a " style="left:53px;top:402px;width:1px;height:19px;background:#000"></div><div class="a " style="left:61px;top:403px;width:25px;height:18px;background:#D4D0C8;border-top:1px solid #fff;border-left:1px solid #fff;border-right:1px solid #404040;border-bottom:1px solid #404040"></div><div class="a " style="left:86px;top:402px;width:1px;height:19px;background:#000"></div><svg class="a" style="left:65px;top:406px" width="17" height="12" viewBox="0 0 17 12"><path d="M3 8 L7 1.5 L8 3 M9 8 L14 2 L15.5 4" stroke="#000" fill="none" stroke-width="1"/><ellipse cx="4" cy="9" rx="2.5" ry="2.5" fill="#20d8e8" stroke="#000"/><ellipse cx="10" cy="9" rx="2.5" ry="2.5" fill="#20d8e8" stroke="#000"/></svg><div class="a " style="left:341px;top:403px;width:50px;height:15px;background:#FFFF99;border-bottom:2px solid #E8E4DC"></div><div class="a t " style="left:341px;top:404px;color:#000">nication pr</div><div class="a " style="left:35px;top:421px;width:962px;height:1px;background:#000"></div><div class="a " style="left:35px;top:422px;width:18px;height:18px;background:#D4D0C8;border-top:1px solid #fff;border-left:1px solid #fff"></div><div class="a " style="left:53px;top:421px;width:1px;height:19px;background:#000"></div><div class="a " style="left:61px;top:422px;width:25px;height:18px;background:#D4D0C8;border-top:1px solid #fff;border-left:1px solid #fff;border-right:1px solid #404040;border-bottom:1px solid #404040"></div><div class="a " style="left:86px;top:421px;width:1px;height:19px;background:#000"></div><svg class="a" style="left:65px;top:425px" width="17" height="12" viewBox="0 0 17 12"><path d="M3 8 L7 1.5 L8 3 M9 8 L14 2 L15.5 4" stroke="#000" fill="none" stroke-width="1"/><ellipse cx="4" cy="9" rx="2.5" ry="2.5" fill="#20d8e8" stroke="#000"/><ellipse cx="10" cy="9" rx="2.5" ry="2.5" fill="#20d8e8" stroke="#000"/></svg><div class="a " style="left:341px;top:422px;width:50px;height:15px;background:#FFFF99;border-bottom:2px solid #E8E4DC"></div><div class="a t " style="left:341px;top:423px;color:#000">&nbsp;services: |</div><div class="a " style="left:35px;top:440px;width:962px;height:1px;background:#000"></div><div class="a " style="left:35px;top:441px;width:18px;height:18px;background:#D4D0C8;border-top:1px solid #fff;border-left:1px solid #fff"></div><div class="a " style="left:53px;top:440px;width:1px;height:19px;background:#000"></div><div class="a " style="left:61px;top:441px;width:25px;height:18px;background:#D4D0C8;border-top:1px solid #fff;border-left:1px solid #fff;border-right:1px solid #404040;border-bottom:1px solid #404040"></div><div class="a " style="left:86px;top:440px;width:1px;height:19px;background:#000"></div><svg class="a" style="left:65px;top:444px" width="17" height="12" viewBox="0 0 17 12"><path d="M3 8 L7 1.5 L8 3 M9 8 L14 2 L15.5 4" stroke="#000" fill="none" stroke-width="1"/><ellipse cx="4" cy="9" rx="2.5" ry="2.5" fill="#20d8e8" stroke="#000"/><ellipse cx="10" cy="9" rx="2.5" ry="2.5" fill="#20d8e8" stroke="#000"/></svg><div class="a " style="left:341px;top:441px;width:50px;height:15px;background:#FFFF99;border-bottom:2px solid #E8E4DC"></div><div class="a t " style="left:341px;top:442px;color:#000">ability; Prot</div><div class="a " style="left:35px;top:459px;width:962px;height:1px;background:#000"></div><div class="a " style="left:35px;top:460px;width:18px;height:18px;background:#D4D0C8;border-top:1px solid #fff;border-left:1px solid #fff"></div><div class="a " style="left:53px;top:459px;width:1px;height:19px;background:#000"></div><div class="a " style="left:61px;top:460px;width:25px;height:18px;background:#D4D0C8;border-top:1px solid #fff;border-left:1px solid #fff;border-right:1px solid #404040;border-bottom:1px solid #404040"></div><div class="a " style="left:86px;top:459px;width:1px;height:19px;background:#000"></div><svg class="a" style="left:65px;top:463px" width="17" height="12" viewBox="0 0 17 12"><path d="M3 8 L7 1.5 L8 3 M9 8 L14 2 L15.5 4" stroke="#000" fill="none" stroke-width="1"/><ellipse cx="4" cy="9" rx="2.5" ry="2.5" fill="#20d8e8" stroke="#000"/><ellipse cx="10" cy="9" rx="2.5" ry="2.5" fill="#20d8e8" stroke="#000"/></svg><div class="a " style="left:341px;top:460px;width:50px;height:15px;background:#FFFF99;border-bottom:2px solid #E8E4DC"></div><div class="a t " style="left:341px;top:461px;color:#000">g the IP M</div><div class="a " style="left:35px;top:478px;width:962px;height:1px;background:#000"></div><div class="a " style="left:35px;top:479px;width:18px;height:18px;background:#D4D0C8;border-top:1px solid #fff;border-left:1px solid #fff"></div><div class="a " style="left:53px;top:478px;width:1px;height:19px;background:#000"></div><div class="a " style="left:61px;top:479px;width:25px;height:18px;background:#D4D0C8;border-top:1px solid #fff;border-left:1px solid #fff;border-right:1px solid #404040;border-bottom:1px solid #404040"></div><div class="a " style="left:86px;top:478px;width:1px;height:19px;background:#000"></div><svg class="a" style="left:65px;top:482px" width="17" height="12" viewBox="0 0 17 12"><path d="M3 8 L7 1.5 L8 3 M9 8 L14 2 L15.5 4" stroke="#000" fill="none" stroke-width="1"/><ellipse cx="4" cy="9" rx="2.5" ry="2.5" fill="#20d8e8" stroke="#000"/><ellipse cx="10" cy="9" rx="2.5" ry="2.5" fill="#20d8e8" stroke="#000"/></svg><div class="a " style="left:341px;top:479px;width:50px;height:15px;background:#FFFF99;border-bottom:2px solid #E8E4DC"></div><div class="a t " style="left:341px;top:480px;color:#000">ry Service</div><div class="a " style="left:35px;top:497px;width:962px;height:1px;background:#000"></div><div class="a " style="left:35px;top:498px;width:18px;height:18px;background:#D4D0C8;border-top:1px solid #fff;border-left:1px solid #fff"></div><div class="a " style="left:53px;top:497px;width:1px;height:19px;background:#000"></div><div class="a " style="left:61px;top:498px;width:25px;height:18px;background:#D4D0C8;border-top:1px solid #fff;border-left:1px solid #fff;border-right:1px solid #404040;border-bottom:1px solid #404040"></div><div class="a " style="left:86px;top:497px;width:1px;height:19px;background:#000"></div><svg class="a" style="left:65px;top:501px" width="17" height="12" viewBox="0 0 17 12"><path d="M3 8 L7 1.5 L8 3 M9 8 L14 2 L15.5 4" stroke="#000" fill="none" stroke-width="1"/><ellipse cx="4" cy="9" rx="2.5" ry="2.5" fill="#20d8e8" stroke="#000"/><ellipse cx="10" cy="9" rx="2.5" ry="2.5" fill="#20d8e8" stroke="#000"/></svg><div class="a " style="left:341px;top:498px;width:50px;height:15px;background:#FFFF99;border-bottom:2px solid #E8E4DC"></div><div class="a t " style="left:341px;top:499px;color:#000">MS over N</div><div class="a " style="left:35px;top:516px;width:962px;height:1px;background:#000"></div><div class="a " style="left:35px;top:517px;width:18px;height:18px;background:#D4D0C8;border-top:1px solid #fff;border-left:1px solid #fff"></div><div class="a " style="left:53px;top:516px;width:1px;height:19px;background:#000"></div><div class="a " style="left:61px;top:517px;width:25px;height:18px;background:#D4D0C8;border-top:1px solid #fff;border-left:1px solid #fff;border-right:1px solid #404040;border-bottom:1px solid #404040"></div><div class="a " style="left:86px;top:516px;width:1px;height:19px;background:#000"></div><svg class="a" style="left:65px;top:520px" width="17" height="12" viewBox="0 0 17 12"><path d="M3 8 L7 1.5 L8 3 M9 8 L14 2 L15.5 4" stroke="#000" fill="none" stroke-width="1"/><ellipse cx="4" cy="9" rx="2.5" ry="2.5" fill="#20d8e8" stroke="#000"/><ellipse cx="10" cy="9" rx="2.5" ry="2.5" fill="#20d8e8" stroke="#000"/></svg><div class="a " style="left:341px;top:517px;width:50px;height:15px;background:#FFFF99;border-bottom:2px solid #E8E4DC"></div><div class="a t " style="left:341px;top:518px;color:#000">&nbsp;services; |</div><div class="a " style="left:35px;top:535px;width:962px;height:1px;background:#000"></div><div class="a " style="left:35px;top:536px;width:18px;height:18px;background:#D4D0C8;border-top:1px solid #fff;border-left:1px solid #fff"></div><div class="a " style="left:53px;top:535px;width:1px;height:19px;background:#000"></div><div class="a " style="left:61px;top:536px;width:25px;height:18px;background:#D4D0C8;border-top:1px solid #fff;border-left:1px solid #fff;border-right:1px solid #404040;border-bottom:1px solid #404040"></div><div class="a " style="left:86px;top:535px;width:1px;height:19px;background:#000"></div><svg class="a" style="left:65px;top:539px" width="17" height="12" viewBox="0 0 17 12"><path d="M3 8 L7 1.5 L8 3 M9 8 L14 2 L15.5 4" stroke="#000" fill="none" stroke-width="1"/><ellipse cx="4" cy="9" rx="2.5" ry="2.5" fill="#20d8e8" stroke="#000"/><ellipse cx="10" cy="9" rx="2.5" ry="2.5" fill="#20d8e8" stroke="#000"/></svg><div class="a " style="left:95px;top:536px;width:87px;height:16px;background:#FFFF99;border-left:1px solid #000;border-right:2px solid #E8E4DC;border-bottom:2px solid #E8E4DC"></div><div class="a t " style="left:98px;top:537px;color:#B03000;font-weight:normal;font-size:12px">24.458</div><div class="a " style="left:185px;top:536px;width:206px;height:16px;background:#FFFF99;border-left:1px solid #000;border-bottom:2px solid #E8E4DC;overflow:hidden"></div><div class="a t " style="left:187px;top:537px;color:#B03000;overflow:hidden;width:204px">TISPAN; SIP Transfer of IP Multimedia Service</div><div class="a " style="left:35px;top:554px;width:962px;height:1px;background:#000"></div><div class="a " style="left:35px;top:555px;width:18px;height:18px;background:#D4D0C8;border-top:1px solid #fff;border-left:1px solid #fff"></div><div class="a " style="left:53px;top:554px;width:1px;height:19px;background:#000"></div><div class="a " style="left:61px;top:555px;width:25px;height:18px;background:#D4D0C8;border-top:1px solid #fff;border-left:1px solid #fff;border-right:1px solid #404040;border-bottom:1px solid #404040"></div><div class="a " style="left:86px;top:554px;width:1px;height:19px;background:#000"></div><svg class="a" style="left:65px;top:558px" width="17" height="12" viewBox="0 0 17 12"><path d="M3 8 L7 1.5 L8 3 M9 8 L14 2 L15.5 4" stroke="#000" fill="none" stroke-width="1"/><ellipse cx="4" cy="9" rx="2.5" ry="2.5" fill="#20d8e8" stroke="#000"/><ellipse cx="10" cy="9" rx="2.5" ry="2.5" fill="#20d8e8" stroke="#000"/></svg><div class="a " style="left:95px;top:555px;width:87px;height:16px;background:#FFFF99;border-left:1px solid #000;border-right:2px solid #E8E4DC;border-bottom:2px solid #E8E4DC"></div><div class="a t " style="left:98px;top:556px;color:#000;font-weight:bold;font-size:12px">24.503</div><div class="a " style="left:185px;top:555px;width:206px;height:16px;background:#FFFF99;border-left:1px solid #000;border-bottom:2px solid #E8E4DC;overflow:hidden"></div><div class="a t " style="left:187px;top:556px;color:#000;overflow:hidden;width:204px">TISPAN; IP Multimedia Call Control Protocol</div><div class="a " style="left:35px;top:573px;width:962px;height:1px;background:#000"></div><div class="a " style="left:35px;top:574px;width:18px;height:18px;background:#D4D0C8;border-top:1px solid #fff;border-left:1px solid #fff"></div><div class="a " style="left:53px;top:573px;width:1px;height:19px;background:#000"></div><div class="a " style="left:61px;top:574px;width:25px;height:18px;background:#D4D0C8;border-top:1px solid #fff;border-left:1px solid #fff;border-right:1px solid #404040;border-bottom:1px solid #404040"></div><div class="a " style="left:86px;top:573px;width:1px;height:19px;background:#000"></div><svg class="a" style="left:65px;top:577px" width="17" height="12" viewBox="0 0 17 12"><path d="M3 8 L7 1.5 L8 3 M9 8 L14 2 L15.5 4" stroke="#000" fill="none" stroke-width="1"/><ellipse cx="4" cy="9" rx="2.5" ry="2.5" fill="#20d8e8" stroke="#000"/><ellipse cx="10" cy="9" rx="2.5" ry="2.5" fill="#20d8e8" stroke="#000"/></svg><div class="a " style="left:95px;top:574px;width:87px;height:16px;background:#FFFF99;border-left:1px solid #000;border-right:2px solid #E8E4DC;border-bottom:2px solid #E8E4DC"></div><div class="a t " style="left:98px;top:575px;color:#000;font-weight:bold;font-size:12px">24.504</div><div class="a " style="left:185px;top:574px;width:206px;height:16px;background:#FFFF99;border-left:1px solid #000;border-bottom:2px solid #E8E4DC;overflow:hidden"></div><div class="a t " style="left:187px;top:575px;color:#000;overflow:hidden;width:204px">TISPAN; PSTN/ISDN simulation services: Originating</div><div class="a " style="left:35px;top:592px;width:962px;height:1px;background:#000"></div><div class="a " style="left:35px;top:593px;width:18px;height:18px;background:#D4D0C8;border-top:1px solid #fff;border-left:1px solid #fff"></div><div class="a " style="left:53px;top:592px;width:1px;height:19px;background:#000"></div><div class="a " style="left:61px;top:593px;width:25px;height:18px;background:#D4D0C8;border-top:1px solid #fff;border-left:1px solid #fff;border-right:1px solid #404040;border-bottom:1px solid #404040"></div><div class="a " style="left:86px;top:592px;width:1px;height:19px;background:#000"></div><svg class="a" style="left:65px;top:596px" width="17" height="12" viewBox="0 0 17 12"><path d="M3 8 L7 1.5 L8 3 M9 8 L14 2 L15.5 4" stroke="#000" fill="none" stroke-width="1"/><ellipse cx="4" cy="9" rx="2.5" ry="2.5" fill="#20d8e8" stroke="#000"/><ellipse cx="10" cy="9" rx="2.5" ry="2.5" fill="#20d8e8" stroke="#000"/></svg><div class="a " style="left:95px;top:593px;width:87px;height:16px;background:#FFFF99;border-left:1px solid #000;border-right:2px solid #E8E4DC;border-bottom:2px solid #E8E4DC"></div><div class="a t " style="left:98px;top:594px;color:#000;font-weight:bold;font-size:12px">24.505</div><div class="a " style="left:185px;top:593px;width:206px;height:16px;background:#FFFF99;border-left:1px solid #000;border-bottom:2px solid #E8E4DC;overflow:hidden"></div><div class="a t " style="left:187px;top:594px;color:#000;overflow:hidden;width:204px">TISPAN; PSTN/ISDN simulation services: Originating</div><div class="a " style="left:35px;top:611px;width:962px;height:1px;background:#000"></div><div class="a " style="left:35px;top:612px;width:18px;height:18px;background:#D4D0C8;border-top:1px solid #fff;border-left:1px solid #fff"></div><div class="a " style="left:53px;top:611px;width:1px;height:19px;background:#000"></div><div class="a " style="left:61px;top:612px;width:25px;height:18px;background:#D4D0C8;border-top:1px solid #fff;border-left:1px solid #fff;border-right:1px solid #404040;border-bottom:1px solid #404040"></div><div class="a " style="left:86px;top:611px;width:1px;height:19px;background:#000"></div><svg class="a" style="left:65px;top:615px" width="17" height="12" viewBox="0 0 17 12"><path d="M3 8 L7 1.5 L8 3 M9 8 L14 2 L15.5 4" stroke="#000" fill="none" stroke-width="1"/><ellipse cx="4" cy="9" rx="2.5" ry="2.5" fill="#20d8e8" stroke="#000"/><ellipse cx="10" cy="9" rx="2.5" ry="2.5" fill="#20d8e8" stroke="#000"/></svg><div class="a " style="left:95px;top:612px;width:87px;height:16px;background:#FFFF99;border-left:1px solid #000;border-right:2px solid #E8E4DC;border-bottom:2px solid #E8E4DC"></div><div class="a t " style="left:98px;top:613px;color:#000;font-weight:bold;font-size:12px">24.508</div><div class="a " style="left:185px;top:612px;width:206px;height:16px;background:#FFFF99;border-left:1px solid #000;border-bottom:2px solid #E8E4DC;overflow:hidden"></div><div class="a t " style="left:187px;top:613px;color:#000;overflow:hidden;width:204px">PSTN/ISDN simulation services Terminating</div><div class="a " style="left:35px;top:630px;width:962px;height:1px;background:#000"></div><div class="a " style="left:35px;top:631px;width:18px;height:18px;background:#D4D0C8;border-top:1px solid #fff;border-left:1px solid #fff"></div><div class="a " style="left:53px;top:630px;width:1px;height:19px;background:#000"></div><div class="a " style="left:61px;top:631px;width:25px;height:18px;background:#D4D0C8;border-top:1px solid #fff;border-left:1px solid #fff;border-right:1px solid #404040;border-bottom:1px solid #404040"></div><div class="a " style="left:86px;top:630px;width:1px;height:19px;background:#000"></div><svg class="a" style="left:65px;top:634px" width="17" height="12" viewBox="0 0 17 12"><path d="M3 8 L7 1.5 L8 3 M9 8 L14 2 L15.5 4" stroke="#000" fill="none" stroke-width="1"/><ellipse cx="4" cy="9" rx="2.5" ry="2.5" fill="#20d8e8" stroke="#000"/><ellipse cx="10" cy="9" rx="2.5" ry="2.5" fill="#20d8e8" stroke="#000"/></svg><div class="a " style="left:95px;top:631px;width:87px;height:16px;background:#FFFF99;border-left:1px solid #000;border-right:2px solid #E8E4DC;border-bottom:2px solid #E8E4DC"></div><div class="a t " style="left:98px;top:632px;color:#000;font-weight:bold;font-size:12px">24.516</div><div class="a " style="left:185px;top:631px;width:206px;height:16px;background:#FFFF99;border-left:1px solid #000;border-bottom:2px solid #E8E4DC;overflow:hidden"></div><div class="a t " style="left:187px;top:632px;color:#000;overflow:hidden;width:204px">TISPAN; PSTN/ISDN simulation services; Malicious</div><div class="a " style="left:35px;top:649px;width:962px;height:1px;background:#000"></div><div class="a " style="left:35px;top:650px;width:18px;height:18px;background:#D4D0C8;border-top:1px solid #fff;border-left:1px solid #fff"></div><div class="a " style="left:53px;top:649px;width:1px;height:19px;background:#000"></div><div class="a " style="left:61px;top:650px;width:25px;height:18px;background:#D4D0C8;border-top:1px solid #fff;border-left:1px solid #fff;border-right:1px solid #404040;border-bottom:1px solid #404040"></div><div class="a " style="left:86px;top:649px;width:1px;height:19px;background:#000"></div><svg class="a" style="left:65px;top:653px" width="17" height="12" viewBox="0 0 17 12"><path d="M3 8 L7 1.5 L8 3 M9 8 L14 2 L15.5 4" stroke="#000" fill="none" stroke-width="1"/><ellipse cx="4" cy="9" rx="2.5" ry="2.5" fill="#20d8e8" stroke="#000"/><ellipse cx="10" cy="9" rx="2.5" ry="2.5" fill="#20d8e8" stroke="#000"/></svg><div class="a " style="left:95px;top:650px;width:87px;height:16px;background:#FFFF99;border-left:1px solid #000;border-right:2px solid #E8E4DC;border-bottom:2px solid #E8E4DC"></div><div class="a t " style="left:98px;top:651px;color:#000;font-weight:bold;font-size:12px">24.528</div><div class="a " style="left:185px;top:650px;width:206px;height:16px;background:#FFFF99;border-left:1px solid #000;border-bottom:2px solid #E8E4DC;overflow:hidden"></div><div class="a t " style="left:187px;top:651px;color:#000;overflow:hidden;width:204px">TISPAN; Common Basic Communication procedures</div><div class="a " style="left:35px;top:668px;width:962px;height:1px;background:#000"></div><div class="a " style="left:35px;top:669px;width:18px;height:18px;background:#D4D0C8;border-top:1px solid #fff;border-left:1px solid #fff"></div><div class="a " style="left:53px;top:668px;width:1px;height:19px;background:#000"></div><div class="a " style="left:61px;top:669px;width:25px;height:18px;background:#D4D0C8;border-top:1px solid #fff;border-left:1px solid #fff;border-right:1px solid #404040;border-bottom:1px solid #404040"></div><div class="a " style="left:86px;top:668px;width:1px;height:19px;background:#000"></div><svg class="a" style="left:65px;top:672px" width="17" height="12" viewBox="0 0 17 12"><path d="M3 8 L7 1.5 L8 3 M9 8 L14 2 L15.5 4" stroke="#000" fill="none" stroke-width="1"/><ellipse cx="4" cy="9" rx="2.5" ry="2.5" fill="#20d8e8" stroke="#000"/><ellipse cx="10" cy="9" rx="2.5" ry="2.5" fill="#20d8e8" stroke="#000"/></svg><div class="a " style="left:95px;top:669px;width:87px;height:16px;background:#FFFF99;border-left:1px solid #000;border-right:2px solid #E8E4DC;border-bottom:2px solid #E8E4DC"></div><div class="a t " style="left:98px;top:670px;color:#000;font-weight:bold;font-size:12px">24.529</div><div class="a " style="left:185px;top:669px;width:206px;height:16px;background:#FFFF99;border-left:1px solid #000;border-bottom:2px solid #E8E4DC;overflow:hidden"></div><div class="a t " style="left:187px;top:670px;color:#000;overflow:hidden;width:204px">TISPAN; PSTN/ISDN simulation services: Explicit</div><div class="a " style="left:35px;top:687px;width:962px;height:1px;background:#000"></div><div class="a " style="left:35px;top:688px;width:18px;height:18px;background:#D4D0C8;border-top:1px solid #fff;border-left:1px solid #fff"></div><div class="a " style="left:53px;top:687px;width:1px;height:19px;background:#000"></div><div class="a " style="left:61px;top:688px;width:25px;height:18px;background:#D4D0C8;border-top:1px solid #fff;border-left:1px solid #fff;border-right:1px solid #404040;border-bottom:1px solid #404040"></div><div class="a " style="left:86px;top:687px;width:1px;height:19px;background:#000"></div><svg class="a" style="left:65px;top:691px" width="17" height="12" viewBox="0 0 17 12"><path d="M3 8 L7 1.5 L8 3 M9 8 L14 2 L15.5 4" stroke="#000" fill="none" stroke-width="1"/><ellipse cx="4" cy="9" rx="2.5" ry="2.5" fill="#20d8e8" stroke="#000"/><ellipse cx="10" cy="9" rx="2.5" ry="2.5" fill="#20d8e8" stroke="#000"/></svg><div class="a " style="left:95px;top:688px;width:87px;height:16px;background:#FFFF99;border-left:1px solid #000;border-right:2px solid #E8E4DC;border-bottom:2px solid #E8E4DC"></div><div class="a t " style="left:98px;top:689px;color:#000;font-weight:bold;font-size:12px">24.604</div><div class="a " style="left:185px;top:688px;width:206px;height:16px;background:#FFFF99;border-left:1px solid #000;border-bottom:2px solid #E8E4DC;overflow:hidden"></div><div class="a t " style="left:187px;top:689px;color:#000;overflow:hidden;width:204px">Communication Diversion (CDIV) using IP Multimedia</div><div class="a " style="left:35px;top:706px;width:962px;height:1px;background:#000"></div><div class="a " style="left:35px;top:707px;width:18px;height:16px;background:#D4D0C8;border-top:1px solid #fff;border-left:1px solid #fff"></div><div class="a " style="left:53px;top:706px;width:1px;height:17px;background:#000"></div><div class="a " style="left:61px;top:707px;width:25px;height:16px;background:#D4D0C8;border-top:1px solid #fff;border-left:1px solid #fff;border-right:1px solid #404040;border-bottom:1px solid #404040"></div><div class="a " style="left:86px;top:706px;width:1px;height:17px;background:#000"></div><svg class="a" style="left:65px;top:710px" width="17" height="12" viewBox="0 0 17 12"><path d="M3 8 L7 1.5 L8 3 M9 8 L14 2 L15.5 4" stroke="#000" fill="none" stroke-width="1"/><ellipse cx="4" cy="9" rx="2.5" ry="2.5" fill="#20d8e8" stroke="#000"/><ellipse cx="10" cy="9" rx="2.5" ry="2.5" fill="#20d8e8" stroke="#000"/></svg><div class="a " style="left:95px;top:707px;width:87px;height:16px;background:#FFFF99;border-left:1px solid #000;border-right:2px solid #E8E4DC;border-bottom:2px solid #E8E4DC"></div><div class="a t " style="left:98px;top:708px;color:#000;font-weight:bold;font-size:12px">24.605</div><div class="a " style="left:185px;top:707px;width:206px;height:16px;background:#FFFF99;border-left:1px solid #000;border-bottom:2px solid #E8E4DC;overflow:hidden"></div><div class="a t " style="left:187px;top:708px;color:#000;overflow:hidden;width:204px">Conference (CONF) using IP Multimedia (IMS)</div><div class="a t " style="left:41px;top:727px;line-height:13px">Record:</div><div class="a" style="left:84px;top:725px;width:19px;height:15px;background:#D4D0C8;border-top:1px solid #fff;border-left:1px solid #fff;border-right:1px solid #404040;border-bottom:1px solid #404040;box-shadow:inset -1px -1px 0 #808080"><svg class="a" style="left:0;top:0" width="17" height="13" viewBox="0 0 17 13"><path d="M4 3V10M11 3L6 6.5L11 10Z" stroke="#000" fill="#000"/></svg></div><div class="a" style="left:103px;top:725px;width:20px;height:15px;background:#D4D0C8;border-top:1px solid #fff;border-left:1px solid #fff;border-right:1px solid #404040;border-bottom:1px solid #404040;box-shadow:inset -1px -1px 0 #808080"><svg class="a" style="left:0;top:0" width="18" height="13" viewBox="0 0 18 13"><path d="M11 3L7 6.5L11 10Z" fill="#000" stroke="#000"/></svg></div><div class="a " style="left:129px;top:724px;width:62px;height:16px;background:#fff;border-top:1px solid #808080;border-left:1px solid #808080;box-shadow:inset 1px 1px 0 #404040"></div><div class="a t " style="left:160px;top:727px;width:28px;text-align:right">1018</div><div class="a" style="left:196px;top:725px;width:20px;height:15px;background:#D4D0C8;border-top:1px solid #fff;border-left:1px solid #fff;border-right:1px solid #404040;border-bottom:1px solid #404040;box-shadow:inset -1px -1px 0 #808080"><svg class="a" style="left:0;top:0" width="18" height="13" viewBox="0 0 18 13"><path d="M7 3L11 6.5L7 10Z" fill="#000" stroke="#000"/></svg></div><div class="a" style="left:216px;top:725px;width:19px;height:15px;background:#D4D0C8;border-top:1px solid #fff;border-left:1px solid #fff;border-right:1px solid #404040;border-bottom:1px solid #404040;box-shadow:inset -1px -1px 0 #808080"><svg class="a" style="left:0;top:0" width="17" height="13" viewBox="0 0 17 13"><path d="M6 3L10 6.5L6 10Z M12 3V10" stroke="#000" fill="#000"/></svg></div><div class="a" style="left:235px;top:725px;width:21px;height:15px;background:#D4D0C8;border-top:1px solid #fff;border-left:1px solid #fff;border-right:1px solid #404040;border-bottom:1px solid #404040;box-shadow:inset -1px -1px 0 #808080"><svg class="a" style="left:0;top:0" width="19" height="13" viewBox="0 0 19 13"><path d="M4 3L8 6.5L4 10Z" fill="#000" stroke="#000"/><path d="M13 3V10M10 4.5L16 8.5M16 4.5L10 8.5" stroke="#000" stroke-width="1.2"/></svg></div><div class="a t " style="left:262px;top:727px;">of&nbsp; 2540</div><div class="a" style="left:62px;top:128px;width:280px;height:404px;background:#D4D0C8;border-top:1px solid #D4D0C8;border-left:1px solid #D4D0C8;border-right:1px solid #404040;border-bottom:1px solid #404040;box-shadow:inset 1px 1px 0 #fff,inset -1px -1px 0 #808080"></div><div class="a " style="left:66px;top:132px;width:272px;height:18px;background:#838084"></div><svg class="a" style="left:68px;top:134px" width="15" height="13" viewBox="0 0 15 13"><defs><linearGradient id="fg" x1="0" x2="1" y1="0" y2="1"><stop offset="0" stop-color="#f8faff"/><stop offset="1" stop-color="#b8c8e8"/></linearGradient><linearGradient id="fb" x1="0" x2="1"><stop offset="0" stop-color="#a8c4ff"/><stop offset="1" stop-color="#3f7ee8"/></linearGradient></defs><rect x="0" y="0" width="15" height="13" fill="url(#fg)"/><rect x="0" y="0" width="15" height="3" fill="url(#fb)"/><rect x="2" y="4" width="4" height="1" fill="#505050"/><rect x="7.5" y="4.5" width="6" height="2.5" fill="#f4f4f4" stroke="#505050" stroke-width="0.9"/><rect x="2" y="8" width="4" height="1" fill="#505050"/><rect x="7.5" y="8.5" width="6" height="2.5" fill="#f4f4f4" stroke="#505050" stroke-width="0.9"/><path d="M14.5 3V12.5H0" stroke="#5a6a90" fill="none"/></svg><div class="a t " style="left:86px;top:134px;font-weight:bold;color:#D4D0C8;font-size:12px;line-height:14px">2006-03-17_tdocs-form : Form</div><div class="a raised" style="left:286px;top:134px;width:16px;height:14px;background:#D4D0C8"><div class="a" style="left:4px;top:8px;width:6px;height:2px;background:#000"></div></div><div class="a raised" style="left:302px;top:134px;width:16px;height:14px;background:#D4D0C8"><div class="a" style="left:3px;top:2px;width:9px;height:8px;border:1px solid #000;border-top-width:2px"></div></div><div class="a raised" style="left:320px;top:134px;width:16px;height:14px;background:#D4D0C8"><svg class="a" style="left:3px;top:2px" width="9" height="8" viewBox="0 0 9 8"><path d="M0.5 0.5 L8 7.5 M8 0.5 L0.5 7.5" stroke="#000" stroke-width="1.6"/></svg></div><div class="a " style="left:66px;top:151px;width:272px;height:376px;background:#008000;border-top:1px solid #808080;border-left:1px solid #808080;border-right:1px solid #fff;border-bottom:1px solid #fff;box-shadow:inset 1px 1px 0 #404040"></div><div class="a btn" style="left:169px;top:156px;width:125px;height:29px;"><span style="">view all by mtg</span></div><div class="a btn" style="left:75px;top:194px;width:34px;height:26px;"><span style="">raw</span></div><div class="a btn" style="left:169px;top:194px;width:125px;height:33px;"><span style="">view by meeting<br>(specify)</span></div><div class="a btn" style="left:169px;top:235px;width:125px;height:33px;"><span style="">view by number<br>(specify)</span></div><div class="a btn" style="left:78px;top:262px;width:76px;height:44px;"><span style="">Missing<br>titles/sources</span></div><div class="a btn" style="left:173px;top:288px;width:116px;height:26px;"><span style="">max/min tdoc not set</span></div><div class="a btn" style="left:78px;top:318px;width:76px;height:26px;"><span style="">No tdoc list</span></div><div class="a btn" style="left:173px;top:322px;width:117px;height:26px;"><span style="">TDoc count per mtg</span></div><div class="a " style="left:105px;top:367px;width:73px;height:17px;background:#fff;border-top:1px solid #808080;border-left:1px solid #808080;border-right:1px solid #fff;border-bottom:1px solid #fff;box-shadow:inset 1px 1px 0 #404040"></div><div class="a btn" style="left:180px;top:367px;width:86px;height:19px;"><span style="">open this TDoc</span></div><div class="a " style="left:93px;top:408px;width:149px;height:108px;border:1px solid #D4D0C8;box-shadow:inset 1px 1px 0 #fff"></div><div class="a t " style="left:103px;top:422px;color:#FFFF00;line-height:13px">Add new TDocs<br>(three steps)</div><div class="a btn" style="left:191px;top:420px;width:45px;height:24px;"><span style="">Step 1</span></div><div class="a btn" style="left:191px;top:453px;width:45px;height:23px;"><span style="">Step 2</span></div><div class="a btn" style="left:191px;top:485px;width:45px;height:25px;"><span style="">Step 3</span></div><div class="a btn" style="left:267px;top:413px;width:54px;height:27px;"><span style="">this mtg</span></div><div class="a" style="left:391px;top:129px;width:637px;height:644px;background:#D4D0C8;border-top:1px solid #D4D0C8;border-left:1px solid #D4D0C8;border-right:1px solid #404040;border-bottom:1px solid #404040;box-shadow:inset 1px 1px 0 #fff,inset -1px -1px 0 #808080"></div><div class="a " style="left:395px;top:133px;width:629px;height:18px;background:#0A246A"></div><svg class="a" style="left:397px;top:135px" width="15" height="13" viewBox="0 0 15 13"><defs><linearGradient id="fg" x1="0" x2="1" y1="0" y2="1"><stop offset="0" stop-color="#f8faff"/><stop offset="1" stop-color="#b8c8e8"/></linearGradient><linearGradient id="fb" x1="0" x2="1"><stop offset="0" stop-color="#a8c4ff"/><stop offset="1" stop-color="#3f7ee8"/></linearGradient></defs><rect x="0" y="0" width="15" height="13" fill="url(#fg)"/><rect x="0" y="0" width="15" height="3" fill="url(#fb)"/><rect x="2" y="4" width="4" height="1" fill="#505050"/><rect x="7.5" y="4.5" width="6" height="2.5" fill="#f4f4f4" stroke="#505050" stroke-width="0.9"/><rect x="2" y="8" width="4" height="1" fill="#505050"/><rect x="7.5" y="8.5" width="6" height="2.5" fill="#f4f4f4" stroke="#505050" stroke-width="0.9"/><path d="M14.5 3V12.5H0" stroke="#5a6a90" fill="none"/></svg><div class="a t " style="left:415px;top:135px;font-weight:bold;color:#fff;font-size:12px;line-height:14px">2010-12-11_tdocsForCurrentMeeting_view_form : Form</div><div class="a raised" style="left:972px;top:135px;width:16px;height:14px;background:#D4D0C8"><div class="a" style="left:4px;top:8px;width:6px;height:2px;background:#000"></div></div><div class="a raised" style="left:988px;top:135px;width:16px;height:14px;background:#D4D0C8"><div class="a" style="left:3px;top:2px;width:9px;height:8px;border:1px solid #000;border-top-width:2px"></div></div><div class="a raised" style="left:1006px;top:135px;width:16px;height:14px;background:#D4D0C8"><svg class="a" style="left:3px;top:2px" width="9" height="8" viewBox="0 0 9 8"><path d="M0.5 0.5 L8 7.5 M8 0.5 L0.5 7.5" stroke="#000" stroke-width="1.6"/></svg></div><div class="a " style="left:395px;top:151px;width:629px;height:618px;background:#D4D0C8;border-top:1px solid #808080;border-left:1px solid #808080;border-right:1px solid #fff;border-bottom:1px solid #fff;box-shadow:inset 1px 1px 0 #404040"></div><div class="a " style="left:397px;top:153px;width:609px;height:597px;background:#008000"></div><div class="a t " style="left:416px;top:155px;color:#FFFF00">doc_mtg:</div><div class="a t " style="left:469px;top:155px;color:#FFFF00">doc_tdoc:</div><div class="a t " style="left:556px;top:155px;color:#FFFF00">doc_title:</div><div class="a t " style="left:669px;top:155px;color:#FFFF00">doc_source:</div><div class="a t " style="left:786px;top:155px;color:#FFFF00">doc_remarks:</div><div class="a t " style="left:911px;top:155px;color:#FFFF00">type:</div><div class="a t " style="left:946px;top:155px;color:#FFFF00">available:</div><div class="a btn" style="left:419px;top:172px;width:23px;height:27px;"><span style="">G</span></div><div class="a btn" style="left:445px;top:172px;width:23px;height:27px;"><span style=""><span style="border:1px dotted #000;padding:1px 1px;line-height:11px">C</span></span></div><div class="a btn" style="left:471px;top:172px;width:23px;height:27px;"><span style="">R</span></div><div class="a btn" style="left:497px;top:172px;width:23px;height:27px;"><span style="">S</span></div><div class="a t " style="left:530px;top:178px;color:#000">Search for tdoc:</div><div class="a " style="left:618px;top:175px;width:63px;height:17px;background:#fff;border-top:1px solid #808080;border-left:1px solid #808080;border-right:1px solid #fff;border-bottom:1px solid #fff;box-shadow:inset 1px 1px 0 #404040"></div><div class="a btn" style="left:691px;top:176px;width:27px;height:30px;"><span style=""><svg width="16" height="13" viewBox="0 0 16 13" style="margin-top:2px"><path d="M2 0H5V3L7 5V13H0V6L2 3Z M14 0H11V3L9 5V13H16V6L14 3Z M7 5H9V9H7Z" fill="#000"/><path d="M2.5 7V11M13.5 7V11M3.5 1V3M12.5 1V3" stroke="#fff" stroke-width="1"/></svg></span></div><div class="a btn" style="left:808px;top:176px;width:34px;height:27px;"><span style="">raw</span></div><div class="a btn" style="left:963px;top:176px;width:30px;height:19px;"><span style="">av?</span></div><div class="a " style="left:397px;top:210px;width:609px;height:1px;background:#000"></div><div class="a " style="left:397px;top:211px;width:18px;height:19px;background:#D4D0C8;border-top:1px solid #fff;border-left:1px solid #fff"></div><div class="a " style="left:415px;top:210px;width:1px;height:20px;background:#000"></div><div class="a cell" style="left:419px;top:211px;width:46px;height:16px;background:#CCFFFF;">CP-55</div><div class="a cell" style="left:468px;top:211px;width:76px;height:16px;background:#fff;font-weight:bold;font-size:12px">CP-120118</div><div class="a cell" style="left:546px;top:211px;width:117px;height:16px;background:#fff;">CR pack on IPXS</div><div class="a cell" style="left:664px;top:211px;width:115px;height:16px;background:#fff;">CT1</div><div class="a cell" style="left:784px;top:211px;width:116px;height:16px;background:#fff;">Approved</div><div class="a cell" style="left:906px;top:211px;width:63px;height:16px;background:#FFCC00;">CR Pack</div><div class="a" style="left:985px;top:211px;width:13px;height:11px;background:#fff;border-left:1px solid #000;border-right:1px solid #fff;border-bottom:1px solid #fff;box-shadow:inset -1px -1px 0 #D4D0C8"><svg class="a" style="left:1px;top:0" width="11" height="10"><path d="M2.5 3.5L5 7.5L9.5 1.5" stroke="#000" stroke-width="2.2" fill="none"/></svg></div><div class="a " style="left:397px;top:230px;width:609px;height:1px;background:#000"></div><div class="a " style="left:397px;top:231px;width:18px;height:19px;background:#D4D0C8;border-top:1px solid #fff;border-left:1px solid #fff"></div><div class="a " style="left:415px;top:230px;width:1px;height:20px;background:#000"></div><div class="a cell" style="left:419px;top:231px;width:46px;height:16px;background:#CCFFFF;">CP-55</div><div class="a cell" style="left:468px;top:231px;width:76px;height:16px;background:#fff;font-weight:bold;font-size:12px">CP-120119</div><div class="a cell" style="left:546px;top:231px;width:117px;height:16px;background:#fff;">CR pack on MRB</div><div class="a cell" style="left:664px;top:231px;width:115px;height:16px;background:#fff;">CT1</div><div class="a cell" style="left:784px;top:231px;width:116px;height:16px;background:#fff;">Approved</div><div class="a cell" style="left:906px;top:231px;width:63px;height:16px;background:#FFCC00;">CR Pack</div><div class="a" style="left:985px;top:231px;width:13px;height:11px;background:#fff;border-left:1px solid #000;border-right:1px solid #fff;border-bottom:1px solid #fff;box-shadow:inset -1px -1px 0 #D4D0C8"><svg class="a" style="left:1px;top:0" width="11" height="10"><path d="M2.5 3.5L5 7.5L9.5 1.5" stroke="#000" stroke-width="2.2" fill="none"/></svg></div><div class="a " style="left:397px;top:250px;width:609px;height:1px;background:#000"></div><div class="a " style="left:397px;top:251px;width:18px;height:19px;background:#D4D0C8;border-top:1px solid #fff;border-left:1px solid #fff"></div><div class="a " style="left:415px;top:250px;width:1px;height:20px;background:#000"></div><div class="a cell" style="left:419px;top:251px;width:46px;height:16px;background:#CCFFFF;">CP-55</div><div class="a cell" style="left:468px;top:251px;width:76px;height:16px;background:#fff;font-weight:bold;font-size:12px">CP-120120</div><div class="a cell" style="left:546px;top:251px;width:117px;height:16px;background:#fff;">CR pack on rSRVCC-CT1</div><div class="a cell" style="left:664px;top:251px;width:115px;height:16px;background:#fff;">CT1</div><div class="a cell" style="left:784px;top:251px;width:116px;height:16px;background:#fff;">Approved</div><div class="a cell" style="left:906px;top:251px;width:63px;height:16px;background:#FFCC00;">CR Pack</div><div class="a" style="left:985px;top:251px;width:13px;height:11px;background:#fff;border-left:1px solid #000;border-right:1px solid #fff;border-bottom:1px solid #fff;box-shadow:inset -1px -1px 0 #D4D0C8"><svg class="a" style="left:1px;top:0" width="11" height="10"><path d="M2.5 3.5L5 7.5L9.5 1.5" stroke="#000" stroke-width="2.2" fill="none"/></svg></div><div class="a " style="left:397px;top:270px;width:609px;height:1px;background:#000"></div><div class="a " style="left:397px;top:271px;width:18px;height:19px;background:#D4D0C8;border-top:1px solid #fff;border-left:1px solid #fff"></div><div class="a " style="left:415px;top:270px;width:1px;height:20px;background:#000"></div><div class="a cell" style="left:419px;top:271px;width:46px;height:16px;background:#CCFFFF;">CP-55</div><div class="a cell" style="left:468px;top:271px;width:76px;height:16px;background:#fff;font-weight:bold;font-size:12px">CP-120121</div><div class="a cell" style="left:546px;top:271px;width:117px;height:16px;background:#fff;">CR pack on RT_VGCS_F</div><div class="a cell" style="left:664px;top:271px;width:115px;height:16px;background:#fff;">CT1</div><div class="a cell" style="left:784px;top:271px;width:116px;height:16px;background:#fff;">Approved</div><div class="a cell" style="left:906px;top:271px;width:63px;height:16px;background:#FFCC00;">CR Pack</div><div class="a" style="left:985px;top:271px;width:13px;height:11px;background:#fff;border-left:1px solid #000;border-right:1px solid #fff;border-bottom:1px solid #fff;box-shadow:inset -1px -1px 0 #D4D0C8"><svg class="a" style="left:1px;top:0" width="11" height="10"><path d="M2.5 3.5L5 7.5L9.5 1.5" stroke="#000" stroke-width="2.2" fill="none"/></svg></div><div class="a " style="left:397px;top:290px;width:609px;height:1px;background:#000"></div><div class="a " style="left:397px;top:291px;width:18px;height:19px;background:#D4D0C8;border-top:1px solid #fff;border-left:1px solid #fff"></div><div class="a " style="left:415px;top:290px;width:1px;height:20px;background:#000"></div><div class="a cell" style="left:419px;top:291px;width:46px;height:16px;background:#CCFFFF;">CP-55</div><div class="a cell" style="left:468px;top:291px;width:76px;height:16px;background:#fff;font-weight:bold;font-size:12px">CP-120122</div><div class="a cell" style="left:546px;top:291px;width:117px;height:16px;background:#fff;">CR pack on SAES2, SAE</div><div class="a cell" style="left:664px;top:291px;width:115px;height:16px;background:#fff;">CT1</div><div class="a cell" style="left:784px;top:291px;width:116px;height:16px;background:#fff;">Approved</div><div class="a cell" style="left:906px;top:291px;width:63px;height:16px;background:#FFCC00;">CR Pack</div><div class="a" style="left:985px;top:291px;width:13px;height:11px;background:#fff;border-left:1px solid #000;border-right:1px solid #fff;border-bottom:1px solid #fff;box-shadow:inset -1px -1px 0 #D4D0C8"><svg class="a" style="left:1px;top:0" width="11" height="10"><path d="M2.5 3.5L5 7.5L9.5 1.5" stroke="#000" stroke-width="2.2" fill="none"/></svg></div><div class="a " style="left:397px;top:310px;width:609px;height:1px;background:#000"></div><div class="a " style="left:397px;top:311px;width:18px;height:19px;background:#D4D0C8;border-top:1px solid #fff;border-left:1px solid #fff"></div><div class="a " style="left:415px;top:310px;width:1px;height:20px;background:#000"></div><div class="a cell" style="left:419px;top:311px;width:46px;height:16px;background:#CCFFFF;">CP-55</div><div class="a cell" style="left:468px;top:311px;width:76px;height:16px;background:#fff;font-weight:bold;font-size:12px">CP-120123</div><div class="a cell" style="left:546px;top:311px;width:117px;height:16px;background:#fff;">CR pack on SIMTC-RAN</div><div class="a cell" style="left:664px;top:311px;width:115px;height:16px;background:#fff;">CT1</div><div class="a cell" style="left:784px;top:311px;width:116px;height:16px;background:#fff;">Approved</div><div class="a cell" style="left:906px;top:311px;width:63px;height:16px;background:#FFCC00;">CR Pack</div><div class="a" style="left:985px;top:311px;width:13px;height:11px;background:#fff;border-left:1px solid #000;border-right:1px solid #fff;border-bottom:1px solid #fff;box-shadow:inset -1px -1px 0 #D4D0C8"><svg class="a" style="left:1px;top:0" width="11" height="10"><path d="M2.5 3.5L5 7.5L9.5 1.5" stroke="#000" stroke-width="2.2" fill="none"/></svg></div><div class="a " style="left:397px;top:330px;width:609px;height:1px;background:#000"></div><div class="a " style="left:397px;top:331px;width:18px;height:19px;background:#D4D0C8;border-top:1px solid #fff;border-left:1px solid #fff"></div><div class="a " style="left:415px;top:330px;width:1px;height:20px;background:#000"></div><div class="a cell" style="left:419px;top:331px;width:46px;height:16px;background:#CCFFFF;">CP-55</div><div class="a cell" style="left:468px;top:331px;width:76px;height:16px;background:#fff;font-weight:bold;font-size:12px">CP-120124</div><div class="a cell" style="left:546px;top:331px;width:117px;height:16px;background:#fff;">CR pack on TEI11 - pack</div><div class="a cell" style="left:664px;top:331px;width:115px;height:16px;background:#fff;">CT1</div><div class="a cell" style="left:784px;top:331px;width:116px;height:16px;background:#fff;">Approved</div><div class="a cell" style="left:906px;top:331px;width:63px;height:16px;background:#FFCC00;">CR Pack</div><div class="a" style="left:985px;top:331px;width:13px;height:11px;background:#fff;border-left:1px solid #000;border-right:1px solid #fff;border-bottom:1px solid #fff;box-shadow:inset -1px -1px 0 #D4D0C8"><svg class="a" style="left:1px;top:0" width="11" height="10"><path d="M2.5 3.5L5 7.5L9.5 1.5" stroke="#000" stroke-width="2.2" fill="none"/></svg></div><div class="a " style="left:397px;top:350px;width:609px;height:1px;background:#000"></div><div class="a " style="left:397px;top:351px;width:18px;height:19px;background:#D4D0C8;border-top:1px solid #fff;border-left:1px solid #fff"></div><div class="a " style="left:415px;top:350px;width:1px;height:20px;background:#000"></div><div class="a cell" style="left:419px;top:351px;width:46px;height:16px;background:#CCFFFF;">CP-55</div><div class="a cell" style="left:468px;top:351px;width:76px;height:16px;background:#fff;font-weight:bold;font-size:12px">CP-120125</div><div class="a cell" style="left:546px;top:351px;width:117px;height:16px;background:#fff;">CR pack on TEI11 - pack</div><div class="a cell" style="left:664px;top:351px;width:115px;height:16px;background:#fff;">CT1</div><div class="a cell" style="left:784px;top:351px;width:116px;height:16px;background:#fff;">Approved</div><div class="a cell" style="left:906px;top:351px;width:63px;height:16px;background:#FFCC00;">CR Pack</div><div class="a" style="left:985px;top:351px;width:13px;height:11px;background:#fff;border-left:1px solid #000;border-right:1px solid #fff;border-bottom:1px solid #fff;box-shadow:inset -1px -1px 0 #D4D0C8"><svg class="a" style="left:1px;top:0" width="11" height="10"><path d="M2.5 3.5L5 7.5L9.5 1.5" stroke="#000" stroke-width="2.2" fill="none"/></svg></div><div class="a " style="left:397px;top:370px;width:609px;height:1px;background:#000"></div><div class="a " style="left:397px;top:371px;width:18px;height:19px;background:#D4D0C8;border-top:1px solid #fff;border-left:1px solid #fff"></div><div class="a " style="left:415px;top:370px;width:1px;height:20px;background:#000"></div><div class="a cell" style="left:419px;top:371px;width:46px;height:16px;background:#CCFFFF;">CP-55</div><div class="a cell" style="left:468px;top:371px;width:76px;height:16px;background:#fff;font-weight:bold;font-size:12px">CP-120126</div><div class="a cell" style="left:546px;top:371px;width:117px;height:16px;background:#fff;">CR pack on vSRVCC-CT1</div><div class="a cell" style="left:664px;top:371px;width:115px;height:16px;background:#fff;">CT1</div><div class="a cell" style="left:784px;top:371px;width:116px;height:16px;background:#fff;">Approved</div><div class="a cell" style="left:906px;top:371px;width:63px;height:16px;background:#FFCC00;">CR Pack</div><div class="a" style="left:985px;top:371px;width:13px;height:11px;background:#fff;border-left:1px solid #000;border-right:1px solid #fff;border-bottom:1px solid #fff;box-shadow:inset -1px -1px 0 #D4D0C8"><svg class="a" style="left:1px;top:0" width="11" height="10"><path d="M2.5 3.5L5 7.5L9.5 1.5" stroke="#000" stroke-width="2.2" fill="none"/></svg></div><div class="a " style="left:397px;top:390px;width:609px;height:1px;background:#000"></div><div class="a " style="left:397px;top:391px;width:18px;height:19px;background:#D4D0C8;border-top:1px solid #fff;border-left:1px solid #fff"></div><div class="a " style="left:415px;top:390px;width:1px;height:20px;background:#000"></div><div class="a cell" style="left:419px;top:391px;width:46px;height:16px;background:#CCFFFF;">CP-55</div><div class="a cell" style="left:468px;top:391px;width:76px;height:16px;background:#fff;font-weight:bold;font-size:12px">CP-120127</div><div class="a cell" style="left:546px;top:391px;width:117px;height:16px;background:#fff;">CR pack on DIDA-CT</div><div class="a cell" style="left:664px;top:391px;width:115px;height:16px;background:#fff;">CT1</div><div class="a cell" style="left:784px;top:391px;width:116px;height:16px;background:#fff;">Approved</div><div class="a cell" style="left:906px;top:391px;width:63px;height:16px;background:#FFCC00;">CR Pack</div><div class="a" style="left:985px;top:391px;width:13px;height:11px;background:#fff;border-left:1px solid #000;border-right:1px solid #fff;border-bottom:1px solid #fff;box-shadow:inset -1px -1px 0 #D4D0C8"><svg class="a" style="left:1px;top:0" width="11" height="10"><path d="M2.5 3.5L5 7.5L9.5 1.5" stroke="#000" stroke-width="2.2" fill="none"/></svg></div><div class="a " style="left:397px;top:410px;width:609px;height:1px;background:#000"></div><div class="a " style="left:397px;top:411px;width:18px;height:19px;background:#D4D0C8;border-top:1px solid #fff;border-left:1px solid #fff"></div><div class="a " style="left:415px;top:410px;width:1px;height:20px;background:#000"></div><div class="a cell" style="left:419px;top:411px;width:46px;height:16px;background:#CCFFFF;">CP-55</div><div class="a cell" style="left:468px;top:411px;width:76px;height:16px;background:#fff;font-weight:bold;font-size:12px">CP-120128</div><div class="a cell" style="left:546px;top:411px;width:117px;height:16px;background:#fff;">Proposed CT WGs meeting</div><div class="a cell" style="left:664px;top:411px;width:115px;height:16px;background:#fff;">CT1, CT3, CT4, CT6 Chairs</div><div class="a cell" style="left:784px;top:411px;width:116px;height:16px;background:#fff;">Revised in 180</div><div class="a cell" style="left:906px;top:411px;width:63px;height:16px;background:#fff;">INFO</div><div class="a" style="left:985px;top:411px;width:13px;height:11px;background:#fff;border-left:1px solid #000;border-right:1px solid #fff;border-bottom:1px solid #fff;box-shadow:inset -1px -1px 0 #D4D0C8"><svg class="a" style="left:1px;top:0" width="11" height="10"><path d="M2.5 3.5L5 7.5L9.5 1.5" stroke="#000" stroke-width="2.2" fill="none"/></svg></div><div class="a " style="left:397px;top:430px;width:609px;height:1px;background:#000"></div><div class="a " style="left:397px;top:431px;width:18px;height:19px;background:#D4D0C8;border-top:1px solid #fff;border-left:1px solid #fff"></div><div class="a " style="left:415px;top:430px;width:1px;height:20px;background:#000"></div><div class="a cell" style="left:419px;top:431px;width:46px;height:16px;background:#CCFFFF;">CP-55</div><div class="a cell" style="left:468px;top:431px;width:76px;height:16px;background:#fff;font-weight:bold;font-size:12px">CP-120129</div><div class="a cell" style="left:546px;top:431px;width:117px;height:16px;background:#fff;">Correction of codec mode</div><div class="a cell" style="left:664px;top:431px;width:115px;height:16px;background:#fff;">Ericsson</div><div class="a cell" style="left:784px;top:431px;width:116px;height:16px;background:#fff;">Withdrawn</div><div class="a cell" style="left:906px;top:431px;width:63px;height:16px;background:#FFCC00;">CR</div><div class="a" style="left:985px;top:431px;width:13px;height:11px;background:#fff;border-left:1px solid #000;border-right:1px solid #fff;border-bottom:1px solid #fff;box-shadow:inset -1px -1px 0 #D4D0C8"><svg class="a" style="left:1px;top:0" width="11" height="10"><path d="M2.5 3.5L5 7.5L9.5 1.5" stroke="#000" stroke-width="2.2" fill="none"/></svg></div><div class="a " style="left:397px;top:450px;width:609px;height:1px;background:#000"></div><div class="a " style="left:397px;top:451px;width:18px;height:19px;background:#D4D0C8;border-top:1px solid #fff;border-left:1px solid #fff"></div><div class="a " style="left:415px;top:450px;width:1px;height:20px;background:#000"></div><div class="a cell" style="left:419px;top:451px;width:46px;height:16px;background:#CCFFFF;">CP-55</div><div class="a cell" style="left:468px;top:451px;width:76px;height:16px;background:#fff;font-weight:bold;font-size:12px">CP-120130</div><div class="a cell" style="left:546px;top:451px;width:117px;height:16px;background:#fff;">LCLS Handover Control</div><div class="a cell" style="left:664px;top:451px;width:115px;height:16px;background:#fff;">Ericsson</div><div class="a cell" style="left:784px;top:451px;width:116px;height:16px;background:#fff;">Noted</div><div class="a cell" style="left:906px;top:451px;width:63px;height:16px;background:#fff;">Discussion</div><div class="a" style="left:985px;top:451px;width:13px;height:11px;background:#fff;border-left:1px solid #000;border-right:1px solid #fff;border-bottom:1px solid #fff;box-shadow:inset -1px -1px 0 #D4D0C8"><svg class="a" style="left:1px;top:0" width="11" height="10"><path d="M2.5 3.5L5 7.5L9.5 1.5" stroke="#000" stroke-width="2.2" fill="none"/></svg></div><div class="a " style="left:397px;top:470px;width:609px;height:1px;background:#000"></div><div class="a " style="left:397px;top:471px;width:18px;height:19px;background:#D4D0C8;border-top:1px solid #fff;border-left:1px solid #fff"></div><div class="a " style="left:415px;top:470px;width:1px;height:20px;background:#000"></div><div class="a cell" style="left:419px;top:471px;width:46px;height:16px;background:#CCFFFF;">CP-55</div><div class="a cell" style="left:468px;top:471px;width:76px;height:16px;background:#fff;font-weight:bold;font-size:12px">CP-120131</div><div class="a cell" style="left:546px;top:471px;width:117px;height:16px;background:#fff;">Additional Control procedure</div><div class="a cell" style="left:664px;top:471px;width:115px;height:16px;background:#fff;">Ericsson</div><div class="a cell" style="left:784px;top:471px;width:116px;height:16px;background:#fff;"></div><div class="a cell" style="left:906px;top:471px;width:63px;height:16px;background:#FFCC00;">CR</div><div class="a" style="left:985px;top:471px;width:13px;height:11px;background:#fff;border-left:1px solid #000;border-right:1px solid #fff;border-bottom:1px solid #fff;box-shadow:inset -1px -1px 0 #D4D0C8"><svg class="a" style="left:1px;top:0" width="11" height="10"><path d="M2.5 3.5L5 7.5L9.5 1.5" stroke="#000" stroke-width="2.2" fill="none"/></svg></div><div class="a " style="left:397px;top:490px;width:609px;height:1px;background:#000"></div><div class="a " style="left:397px;top:491px;width:18px;height:19px;background:#D4D0C8;border-top:1px solid #fff;border-left:1px solid #fff"></div><div class="a " style="left:415px;top:490px;width:1px;height:20px;background:#000"></div><div class="a cell" style="left:419px;top:491px;width:46px;height:16px;background:#CCFFFF;">CP-55</div><div class="a cell" style="left:468px;top:491px;width:76px;height:16px;background:#fff;font-weight:bold;font-size:12px">CP-120132</div><div class="a cell" style="left:546px;top:491px;width:117px;height:16px;background:#fff;">Correction of codec mode</div><div class="a cell" style="left:664px;top:491px;width:115px;height:16px;background:#fff;">Nokia Siemens Networks</div><div class="a cell" style="left:784px;top:491px;width:116px;height:16px;background:#fff;">Revised in 178</div><div class="a cell" style="left:906px;top:491px;width:63px;height:16px;background:#FFCC00;">CR</div><div class="a" style="left:985px;top:491px;width:13px;height:11px;background:#fff;border-left:1px solid #000;border-right:1px solid #fff;border-bottom:1px solid #fff;box-shadow:inset -1px -1px 0 #D4D0C8"><svg class="a" style="left:1px;top:0" width="11" height="10"><path d="M2.5 3.5L5 7.5L9.5 1.5" stroke="#000" stroke-width="2.2" fill="none"/></svg></div><div class="a " style="left:397px;top:510px;width:609px;height:1px;background:#000"></div><div class="a " style="left:397px;top:511px;width:18px;height:19px;background:#D4D0C8;border-top:1px solid #fff;border-left:1px solid #fff"></div><div class="a " style="left:415px;top:510px;width:1px;height:20px;background:#000"></div><div class="a cell" style="left:419px;top:511px;width:46px;height:16px;background:#CCFFFF;">CP-55</div><div class="a cell" style="left:468px;top:511px;width:76px;height:16px;background:#fff;font-weight:bold;font-size:12px">CP-120133</div><div class="a cell" style="left:546px;top:511px;width:117px;height:16px;background:#fff;">MCC support team report</div><div class="a cell" style="left:664px;top:511px;width:115px;height:16px;background:#fff;">MCC/JMM</div><div class="a cell" style="left:784px;top:511px;width:116px;height:16px;background:#fff;"></div><div class="a cell" style="left:906px;top:511px;width:63px;height:16px;background:#fff;">Information</div><div class="a" style="left:985px;top:511px;width:13px;height:11px;background:#fff;border-left:1px solid #000;border-right:1px solid #fff;border-bottom:1px solid #fff;box-shadow:inset -1px -1px 0 #D4D0C8"><svg class="a" style="left:1px;top:0" width="11" height="10"><path d="M2.5 3.5L5 7.5L9.5 1.5" stroke="#000" stroke-width="2.2" fill="none"/></svg></div><div class="a " style="left:397px;top:530px;width:609px;height:1px;background:#000"></div><div class="a " style="left:397px;top:531px;width:18px;height:19px;background:#D4D0C8;border-top:1px solid #fff;border-left:1px solid #fff"></div><div class="a " style="left:415px;top:530px;width:1px;height:20px;background:#000"></div><div class="a cell" style="left:419px;top:531px;width:46px;height:16px;background:#CCFFFF;">CP-55</div><div class="a cell" style="left:468px;top:531px;width:76px;height:16px;background:#fff;font-weight:bold;font-size:12px">CP-120134</div><div class="a cell" style="left:546px;top:531px;width:117px;height:16px;background:#fff;">3GPP Work Plan review</div><div class="a cell" style="left:664px;top:531px;width:115px;height:16px;background:#fff;">MCC/AZ</div><div class="a cell" style="left:784px;top:531px;width:116px;height:16px;background:#fff;"></div><div class="a cell" style="left:906px;top:531px;width:63px;height:16px;background:#fff;">Work Plan</div><div class="a" style="left:985px;top:531px;width:13px;height:11px;background:#fff;border-left:1px solid #000;border-right:1px solid #fff;border-bottom:1px solid #fff;box-shadow:inset -1px -1px 0 #D4D0C8"><svg class="a" style="left:1px;top:0" width="11" height="10"><path d="M2.5 3.5L5 7.5L9.5 1.5" stroke="#000" stroke-width="2.2" fill="none"/></svg></div><div class="a " style="left:397px;top:550px;width:609px;height:1px;background:#000"></div><div class="a " style="left:397px;top:551px;width:18px;height:19px;background:#D4D0C8;border-top:1px solid #fff;border-left:1px solid #fff"></div><div class="a " style="left:415px;top:550px;width:1px;height:20px;background:#000"></div><div class="a cell" style="left:419px;top:551px;width:46px;height:16px;background:#CCFFFF;">CP-55</div><div class="a cell" style="left:468px;top:551px;width:76px;height:16px;background:#fff;font-weight:bold;font-size:12px">CP-120135</div><div class="a cell" style="left:546px;top:551px;width:117px;height:16px;background:#fff;">Update of the 3GPP WI</div><div class="a cell" style="left:664px;top:551px;width:115px;height:16px;background:#fff;">MCC/AZ</div><div class="a cell" style="left:784px;top:551px;width:116px;height:16px;background:#fff;"></div><div class="a cell" style="left:906px;top:551px;width:63px;height:16px;background:#fff;">Information</div><div class="a" style="left:985px;top:551px;width:13px;height:11px;background:#fff;border-left:1px solid #000;border-right:1px solid #fff;border-bottom:1px solid #fff;box-shadow:inset -1px -1px 0 #D4D0C8"><svg class="a" style="left:1px;top:0" width="11" height="10"><path d="M2.5 3.5L5 7.5L9.5 1.5" stroke="#000" stroke-width="2.2" fill="none"/></svg></div><div class="a " style="left:397px;top:570px;width:609px;height:1px;background:#000"></div><div class="a " style="left:397px;top:571px;width:18px;height:19px;background:#D4D0C8;border-top:1px solid #fff;border-left:1px solid #fff"></div><div class="a " style="left:415px;top:570px;width:1px;height:20px;background:#000"></div><div class="a cell" style="left:419px;top:571px;width:46px;height:16px;background:#CCFFFF;">CP-55</div><div class="a cell" style="left:468px;top:571px;width:76px;height:16px;background:#fff;font-weight:bold;font-size:12px">CP-120136</div><div class="a cell" style="left:546px;top:571px;width:117px;height:16px;background:#fff;">Clarification on treatment</div><div class="a cell" style="left:664px;top:571px;width:115px;height:16px;background:#fff;">MCC/JM</div><div class="a cell" style="left:784px;top:571px;width:116px;height:16px;background:#fff;"></div><div class="a cell" style="left:906px;top:571px;width:63px;height:16px;background:#fff;">Information</div><div class="a" style="left:985px;top:571px;width:13px;height:11px;background:#fff;border-left:1px solid #000;border-right:1px solid #fff;border-bottom:1px solid #fff;box-shadow:inset -1px -1px 0 #D4D0C8"><svg class="a" style="left:1px;top:0" width="11" height="10"><path d="M2.5 3.5L5 7.5L9.5 1.5" stroke="#000" stroke-width="2.2" fill="none"/></svg></div><div class="a " style="left:397px;top:590px;width:609px;height:1px;background:#000"></div><div class="a " style="left:397px;top:591px;width:18px;height:19px;background:#D4D0C8;border-top:1px solid #fff;border-left:1px solid #fff"></div><div class="a " style="left:415px;top:590px;width:1px;height:20px;background:#000"></div><div class="a cell" style="left:419px;top:591px;width:46px;height:16px;background:#CCFFFF;">CP-55</div><div class="a cell" style="left:468px;top:591px;width:76px;height:16px;background:#fff;font-weight:bold;font-size:12px">CP-120137</div><div class="a cell" style="left:546px;top:591px;width:117px;height:16px;background:#fff;">Correction to references</div><div class="a cell" style="left:664px;top:591px;width:115px;height:16px;background:#fff;">MCC/JM</div><div class="a cell" style="left:784px;top:591px;width:116px;height:16px;background:#fff;">Withdrawn</div><div class="a cell" style="left:906px;top:591px;width:63px;height:16px;background:#fff;">Information</div><div class="a" style="left:985px;top:591px;width:13px;height:11px;background:#fff;border-left:1px solid #000;border-right:1px solid #fff;border-bottom:1px solid #fff;box-shadow:inset -1px -1px 0 #D4D0C8"><svg class="a" style="left:1px;top:0" width="11" height="10"></svg></div><div class="a " style="left:397px;top:610px;width:609px;height:1px;background:#000"></div><div class="a " style="left:397px;top:611px;width:18px;height:19px;background:#D4D0C8;border-top:1px solid #fff;border-left:1px solid #fff"></div><div class="a " style="left:415px;top:610px;width:1px;height:20px;background:#000"></div><div class="a cell" style="left:419px;top:611px;width:46px;height:16px;background:#CCFFFF;">CP-55</div><div class="a cell" style="left:468px;top:611px;width:76px;height:16px;background:#fff;font-weight:bold;font-size:12px">CP-120138</div><div class="a cell" style="left:546px;top:611px;width:117px;height:16px;background:#fff;">Corrections to lists of s</div><div class="a cell" style="left:664px;top:611px;width:115px;height:16px;background:#fff;">MCC/JM</div><div class="a cell" style="left:784px;top:611px;width:116px;height:16px;background:#fff;"></div><div class="a cell" style="left:906px;top:611px;width:63px;height:16px;background:#fff;">Information</div><div class="a" style="left:985px;top:611px;width:13px;height:11px;background:#fff;border-left:1px solid #000;border-right:1px solid #fff;border-bottom:1px solid #fff;box-shadow:inset -1px -1px 0 #D4D0C8"><svg class="a" style="left:1px;top:0" width="11" height="10"><path d="M2.5 3.5L5 7.5L9.5 1.5" stroke="#000" stroke-width="2.2" fill="none"/></svg></div><div class="a " style="left:397px;top:630px;width:609px;height:1px;background:#000"></div><div class="a " style="left:397px;top:631px;width:18px;height:19px;background:#D4D0C8;border-top:1px solid #fff;border-left:1px solid #fff"></div><div class="a " style="left:415px;top:630px;width:1px;height:20px;background:#000"></div><div class="a cell" style="left:419px;top:631px;width:46px;height:16px;background:#CCFFFF;">CP-55</div><div class="a cell" style="left:468px;top:631px;width:76px;height:16px;background:#fff;font-weight:bold;font-size:12px">CP-120139</div><div class="a cell" style="left:546px;top:631px;width:117px;height:16px;background:#fff;">Modification to CR cover</div><div class="a cell" style="left:664px;top:631px;width:115px;height:16px;background:#fff;">MCC/JM</div><div class="a cell" style="left:784px;top:631px;width:116px;height:16px;background:#fff;"></div><div class="a cell" style="left:906px;top:631px;width:63px;height:16px;background:#fff;">Information</div><div class="a" style="left:985px;top:631px;width:13px;height:11px;background:#fff;border-left:1px solid #000;border-right:1px solid #fff;border-bottom:1px solid #fff;box-shadow:inset -1px -1px 0 #D4D0C8"><svg class="a" style="left:1px;top:0" width="11" height="10"><path d="M2.5 3.5L5 7.5L9.5 1.5" stroke="#000" stroke-width="2.2" fill="none"/></svg></div><div class="a " style="left:397px;top:650px;width:609px;height:1px;background:#000"></div><div class="a " style="left:397px;top:651px;width:18px;height:19px;background:#D4D0C8;border-top:1px solid #fff;border-left:1px solid #fff"></div><div class="a " style="left:415px;top:650px;width:1px;height:20px;background:#000"></div><div class="a cell" style="left:419px;top:651px;width:46px;height:16px;background:#CCFFFF;">CP-55</div><div class="a cell" style="left:468px;top:651px;width:76px;height:16px;background:#fff;font-weight:bold;font-size:12px">CP-120140</div><div class="a cell" style="left:546px;top:651px;width:117px;height:16px;background:#fff;">Chairman's status report</div><div class="a cell" style="left:664px;top:651px;width:115px;height:16px;background:#fff;">CT6 Chairman</div><div class="a cell" style="left:784px;top:651px;width:116px;height:16px;background:#fff;">Noted</div><div class="a cell" style="left:906px;top:651px;width:63px;height:16px;background:#fff;">REPORT</div><div class="a" style="left:985px;top:651px;width:13px;height:11px;background:#fff;border-left:1px solid #000;border-right:1px solid #fff;border-bottom:1px solid #fff;box-shadow:inset -1px -1px 0 #D4D0C8"><svg class="a" style="left:1px;top:0" width="11" height="10"><path d="M2.5 3.5L5 7.5L9.5 1.5" stroke="#000" stroke-width="2.2" fill="none"/></svg></div><div class="a " style="left:397px;top:670px;width:609px;height:1px;background:#000"></div><div class="a " style="left:397px;top:671px;width:18px;height:19px;background:#D4D0C8;border-top:1px solid #fff;border-left:1px solid #fff"></div><div class="a " style="left:415px;top:670px;width:1px;height:20px;background:#000"></div><div class="a cell" style="left:419px;top:671px;width:46px;height:16px;background:#CCFFFF;">CP-55</div><div class="a cell" style="left:468px;top:671px;width:76px;height:16px;background:#fff;font-weight:bold;font-size:12px">CP-120141</div><div class="a cell" style="left:546px;top:671px;width:117px;height:16px;background:#fff;">Draft Report of CT6#64</div><div class="a cell" style="left:664px;top:671px;width:115px;height:16px;background:#fff;">MCC</div><div class="a cell" style="left:784px;top:671px;width:116px;height:16px;background:#fff;">Noted</div><div class="a cell" style="left:906px;top:671px;width:63px;height:16px;background:#fff;">REPORT</div><div class="a" style="left:985px;top:671px;width:13px;height:11px;background:#fff;border-left:1px solid #000;border-right:1px solid #fff;border-bottom:1px solid #fff;box-shadow:inset -1px -1px 0 #D4D0C8"><svg class="a" style="left:1px;top:0" width="11" height="10"><path d="M2.5 3.5L5 7.5L9.5 1.5" stroke="#000" stroke-width="2.2" fill="none"/></svg></div><div class="a " style="left:397px;top:690px;width:609px;height:1px;background:#000"></div><div class="a " style="left:397px;top:691px;width:18px;height:19px;background:#D4D0C8;border-top:1px solid #fff;border-left:1px solid #fff"></div><div class="a " style="left:415px;top:690px;width:1px;height:20px;background:#000"></div><div class="a cell" style="left:419px;top:691px;width:46px;height:16px;background:#CCFFFF;">CP-55</div><div class="a cell" style="left:468px;top:691px;width:76px;height:16px;background:#fff;font-weight:bold;font-size:12px">CP-120142</div><div class="a cell" style="left:546px;top:691px;width:117px;height:16px;background:#fff;">2 CRs against TS 31.102</div><div class="a cell" style="left:664px;top:691px;width:115px;height:16px;background:#fff;">CT6</div><div class="a cell" style="left:784px;top:691px;width:116px;height:16px;background:#fff;">Revised in 173</div><div class="a cell" style="left:906px;top:691px;width:63px;height:16px;background:#FFCC00;">CR Pack</div><div class="a" style="left:985px;top:691px;width:13px;height:11px;background:#fff;border-left:1px solid #000;border-right:1px solid #fff;border-bottom:1px solid #fff;box-shadow:inset -1px -1px 0 #D4D0C8"><svg class="a" style="left:1px;top:0" width="11" height="10"><path d="M2.5 3.5L5 7.5L9.5 1.5" stroke="#000" stroke-width="2.2" fill="none"/></svg></div><div class="a " style="left:397px;top:710px;width:609px;height:1px;background:#000"></div><div class="a " style="left:397px;top:711px;width:18px;height:19px;background:#D4D0C8;border-top:1px solid #fff;border-left:1px solid #fff"></div><div class="a " style="left:415px;top:710px;width:1px;height:20px;background:#000"></div><div class="a cell" style="left:419px;top:711px;width:46px;height:16px;background:#CCFFFF;">CP-55</div><div class="a cell" style="left:468px;top:711px;width:76px;height:16px;background:#fff;font-weight:bold;font-size:12px">CP-120143</div><div class="a cell" style="left:546px;top:711px;width:117px;height:16px;background:#fff;">1 CR against TS 31.102</div><div class="a cell" style="left:664px;top:711px;width:115px;height:16px;background:#fff;">CT6</div><div class="a cell" style="left:784px;top:711px;width:116px;height:16px;background:#fff;">Approved</div><div class="a cell" style="left:906px;top:711px;width:63px;height:16px;background:#FFCC00;">CR Pack</div><div class="a" style="left:985px;top:711px;width:13px;height:11px;background:#fff;border-left:1px solid #000;border-right:1px solid #fff;border-bottom:1px solid #fff;box-shadow:inset -1px -1px 0 #D4D0C8"><svg class="a" style="left:1px;top:0" width="11" height="10"><path d="M2.5 3.5L5 7.5L9.5 1.5" stroke="#000" stroke-width="2.2" fill="none"/></svg></div><div class="a " style="left:397px;top:730px;width:609px;height:1px;background:#000"></div><div class="a " style="left:397px;top:731px;width:18px;height:19px;background:#D4D0C8;border-top:1px solid #fff;border-left:1px solid #fff"></div><div class="a " style="left:415px;top:730px;width:1px;height:20px;background:#000"></div><div class="a cell" style="left:419px;top:731px;width:46px;height:16px;background:#CCFFFF;">CP-55</div><div class="a cell" style="left:468px;top:731px;width:76px;height:16px;background:#fff;font-weight:bold;font-size:12px">CP-120144</div><div class="a cell" style="left:546px;top:731px;width:117px;height:16px;background:#fff;">1 CR against TS 31.102</div><div class="a cell" style="left:664px;top:731px;width:115px;height:16px;background:#fff;">CT6</div><div class="a cell" style="left:784px;top:731px;width:116px;height:16px;background:#fff;">Revised in 181</div><div class="a cell" style="left:906px;top:731px;width:63px;height:16px;background:#FFCC00;">CR Pack</div><div class="a" style="left:985px;top:731px;width:13px;height:11px;background:#fff;border-left:1px solid #000;border-right:1px solid #fff;border-bottom:1px solid #fff;box-shadow:inset -1px -1px 0 #D4D0C8"><svg class="a" style="left:1px;top:0" width="11" height="10"><path d="M2.5 3.5L5 7.5L9.5 1.5" stroke="#000" stroke-width="2.2" fill="none"/></svg></div><div class="a " style="left:1006px;top:153px;width:16px;height:597px;background-color:#EEEDEA;background-image:repeating-conic-gradient(#fff 0 25%,#D4D0C8 0 50%);background-size:2px 2px"></div><div class="a raised" style="left:1006px;top:154px;width:16px;height:15px;background:#D4D0C8"><svg class="a" style="left:0;top:3px" width="14" height="8"><path d="M3 6L7 2L11 6Z" fill="#000"/></svg></div><div class="a raised" style="left:1006px;top:735px;width:16px;height:15px;background:#D4D0C8"><svg class="a" style="left:0;top:3px" width="14" height="8"><path d="M3 2L7 6L11 2Z" fill="#000"/></svg></div><div class="a raised" style="left:1006px;top:501px;width:16px;height:72px;background:#D4D0C8"></div><div class="a t " style="left:402px;top:754px;">Record:</div><div class="a" style="left:446px;top:752px;width:20px;height:15px;background:#D4D0C8;border-top:1px solid #fff;border-left:1px solid #fff;border-right:1px solid #404040;border-bottom:1px solid #404040;box-shadow:inset -1px -1px 0 #808080"><svg class="a" style="left:0;top:0" width="18" height="13" viewBox="0 0 18 13"><path d="M4 3V10M11 3L6 6.5L11 10Z" stroke="#000" fill="#000"/></svg></div><div class="a" style="left:466px;top:752px;width:20px;height:15px;background:#D4D0C8;border-top:1px solid #fff;border-left:1px solid #fff;border-right:1px solid #404040;border-bottom:1px solid #404040;box-shadow:inset -1px -1px 0 #808080"><svg class="a" style="left:0;top:0" width="18" height="13" viewBox="0 0 18 13"><path d="M11 3L7 6.5L11 10Z" fill="#a0a0a0" stroke="#fff" stroke-width="0.5"/></svg></div><div class="a " style="left:491px;top:751px;width:62px;height:16px;background:#fff;border-top:1px solid #808080;border-left:1px solid #808080;box-shadow:inset 1px 1px 0 #404040"></div><div class="a t " style="left:520px;top:754px;width:30px;text-align:right">1</div><div class="a" style="left:558px;top:752px;width:20px;height:15px;background:#D4D0C8;border-top:1px solid #fff;border-left:1px solid #fff;border-right:1px solid #404040;border-bottom:1px solid #404040;box-shadow:inset -1px -1px 0 #808080"><svg class="a" style="left:0;top:0" width="18" height="13" viewBox="0 0 18 13"><path d="M7 3L11 6.5L7 10Z" fill="#000" stroke="#000"/></svg></div><div class="a" style="left:578px;top:752px;width:19px;height:15px;background:#D4D0C8;border-top:1px solid #fff;border-left:1px solid #fff;border-right:1px solid #404040;border-bottom:1px solid #404040;box-shadow:inset -1px -1px 0 #808080"><svg class="a" style="left:0;top:0" width="17" height="13" viewBox="0 0 17 13"><path d="M6 3L10 6.5L6 10Z M12 3V10" stroke="#000" fill="#000"/></svg></div><div class="a" style="left:597px;top:752px;width:20px;height:15px;background:#D4D0C8;border-top:1px solid #fff;border-left:1px solid #fff;border-right:1px solid #404040;border-bottom:1px solid #404040;box-shadow:inset -1px -1px 0 #808080"><svg class="a" style="left:0;top:0" width="18" height="13" viewBox="0 0 18 13"><path d="M4 3L8 6.5L4 10Z" fill="#000" stroke="#000"/><path d="M13 3V10M10 4.5L16 8.5M16 4.5L10 8.5" stroke="#000" stroke-width="1.2"/></svg></div><div class="a t " style="left:624px;top:754px;">of&nbsp; 199 (Filtered)</div></body></html>
